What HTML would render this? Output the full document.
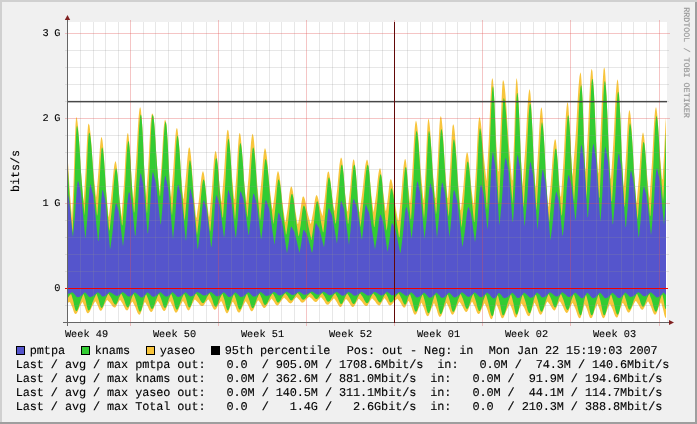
<!DOCTYPE html><html><head><meta charset="utf-8"><style>html,body{margin:0;padding:0;width:697px;height:424px;overflow:hidden;background:#f0f0f0}</style></head><body><svg width="697" height="424" viewBox="0 0 697 424" style="position:absolute;left:0;top:0;will-change:transform">
<rect x="0" y="0" width="697" height="424" fill="#f0f0f0"/>
<path d="M0,0 H697 V2 H2 V424 H0 Z" fill="#d0d0d0" shape-rendering="crispEdges"/>
<path d="M697,0 V424 H0 V422 H695 V2 H697 Z" fill="#9e9e9e" shape-rendering="crispEdges"/>
<rect x="67" y="22" width="600" height="300" fill="#ffffff" shape-rendering="crispEdges"/>
<path d="M67.5,288.0 L67.5,157.3 L68.0,162.7 L68.5,170.1 L69.0,178.8 L69.5,187.0 L70.0,194.2 L70.5,200.2 L71.0,206.2 L71.5,212.3 L72.0,218.3 L72.5,206.4 L73.0,194.6 L73.5,182.7 L74.0,168.7 L74.5,152.0 L75.0,136.4 L75.5,124.7 L76.0,118.2 L76.5,116.9 L77.0,118.5 L77.5,121.9 L78.0,126.6 L78.5,133.2 L79.0,139.5 L79.5,146.7 L80.0,154.7 L80.5,163.5 L81.0,171.4 L81.5,177.8 L82.0,183.7 L82.5,189.7 L83.0,195.6 L83.5,201.5 L84.0,196.3 L84.5,188.4 L85.0,180.4 L85.5,172.4 L86.0,162.6 L86.5,151.2 L87.0,140.6 L87.5,131.9 L88.0,125.8 L88.5,123.5 L89.0,124.2 L89.5,125.6 L90.0,129.4 L90.5,133.5 L91.0,139.7 L91.5,146.0 L92.0,153.1 L92.5,160.5 L93.0,166.7 L93.5,172.4 L94.0,177.4 L94.5,182.4 L95.0,187.4 L95.5,192.5 L96.0,197.5 L96.5,193.9 L97.0,188.2 L97.5,182.5 L98.0,176.8 L98.5,170.1 L99.0,162.5 L99.5,154.1 L100.0,147.1 L100.5,141.8 L101.0,138.3 L101.5,136.7 L102.0,138.3 L102.5,140.6 L103.0,145.1 L103.5,150.8 L104.0,157.8 L104.5,165.8 L105.0,173.7 L105.5,181.5 L106.0,188.4 L106.5,194.2 L107.0,199.9 L107.5,205.7 L108.0,211.4 L108.5,217.2 L109.0,215.0 L109.5,210.8 L110.0,206.7 L110.5,202.5 L111.0,198.4 L111.5,193.6 L112.0,188.5 L112.5,182.5 L113.0,176.5 L113.5,171.5 L114.0,167.2 L114.5,163.9 L115.0,162.2 L115.5,161.0 L116.0,162.3 L116.5,164.8 L117.0,168.5 L117.5,174.1 L118.0,179.5 L118.5,185.7 L119.0,193.0 L119.5,198.3 L120.0,202.9 L120.5,207.6 L121.0,212.2 L121.5,216.9 L122.0,210.2 L122.5,203.5 L123.0,196.8 L123.5,190.1 L124.0,182.9 L124.5,174.7 L125.0,165.3 L125.5,155.6 L126.0,147.4 L126.5,140.8 L127.0,135.5 L127.5,133.5 L128.0,133.1 L128.5,135.2 L129.0,140.4 L129.5,146.1 L130.0,152.1 L130.5,159.9 L131.0,169.3 L131.5,178.2 L132.0,186.1 L132.5,192.7 L133.0,199.2 L133.5,196.0 L134.0,189.3 L134.5,182.6 L135.0,175.9 L135.5,169.2 L136.0,161.9 L136.5,153.7 L137.0,144.3 L137.5,134.4 L138.0,126.1 L138.5,118.4 L139.0,113.1 L139.5,109.1 L140.0,107.2 L140.5,107.8 L141.0,110.6 L141.5,116.0 L142.0,122.1 L142.5,130.0 L143.0,140.2 L143.5,152.3 L144.0,164.0 L144.5,173.6 L145.0,181.4 L145.5,189.2 L146.0,197.0 L146.5,190.1 L147.0,183.1 L147.5,176.2 L148.0,169.2 L148.5,161.5 L149.0,152.9 L149.5,142.6 L150.0,133.3 L150.5,124.8 L151.0,119.3 L151.5,115.5 L152.0,113.6 L152.5,113.8 L153.0,114.6 L153.5,116.2 L154.0,120.8 L154.5,125.9 L155.0,133.0 L155.5,140.7 L156.0,149.4 L156.5,157.2 L157.0,164.4 L157.5,170.6 L158.0,176.4 L158.5,182.2 L159.0,188.1 L159.5,191.8 L160.0,185.2 L160.5,178.7 L161.0,172.1 L161.5,164.7 L162.0,156.7 L162.5,146.9 L163.0,138.0 L163.5,130.0 L164.0,124.8 L164.5,121.2 L165.0,119.4 L165.5,120.6 L166.0,121.9 L166.5,124.9 L167.0,131.0 L167.5,139.2 L168.0,148.6 L168.5,159.9 L169.0,170.3 L169.5,179.6 L170.0,187.4 L170.5,195.0 L171.0,197.4 L171.5,191.3 L172.0,185.3 L172.5,179.3 L173.0,173.2 L173.5,166.0 L174.0,158.0 L174.5,149.0 L175.0,141.5 L175.5,135.2 L176.0,130.4 L176.5,128.4 L177.0,128.0 L177.5,129.6 L178.0,133.5 L178.5,138.3 L179.0,144.0 L179.5,150.3 L180.0,157.7 L180.5,166.4 L181.0,175.1 L181.5,180.8 L182.0,186.4 L182.5,192.1 L183.0,197.8 L183.5,199.4 L184.0,194.8 L184.5,190.3 L185.0,185.8 L185.5,181.2 L186.0,175.8 L186.5,169.8 L187.0,163.1 L187.5,157.4 L188.0,152.7 L188.5,149.1 L189.0,147.6 L189.5,147.4 L190.0,148.8 L190.5,152.2 L191.0,156.4 L191.5,162.7 L192.0,169.4 L192.5,177.2 L193.0,184.4 L193.5,190.8 L194.0,196.4 L194.5,201.7 L195.0,206.9 L195.5,212.2 L196.0,217.5 L196.5,217.5 L197.0,213.9 L197.5,210.3 L198.0,206.8 L198.5,203.2 L199.0,199.2 L199.5,194.8 L200.0,189.8 L200.5,184.6 L201.0,180.2 L201.5,176.5 L202.0,173.6 L202.5,172.1 L203.0,171.1 L203.5,172.2 L204.0,174.2 L204.5,177.3 L205.0,181.9 L205.5,187.0 L206.0,192.8 L206.5,197.6 L207.0,202.0 L207.5,205.8 L208.0,209.7 L208.5,213.6 L209.0,217.4 L209.5,214.0 L210.0,208.8 L210.5,203.6 L211.0,198.4 L211.5,193.2 L212.0,186.9 L212.5,180.2 L213.0,172.5 L213.5,165.7 L214.0,159.5 L214.5,155.3 L215.0,152.3 L215.5,150.9 L216.0,151.6 L216.5,153.7 L217.0,157.3 L217.5,162.5 L218.0,166.9 L218.5,172.7 L219.0,179.3 L219.5,186.2 L220.0,190.7 L220.5,195.3 L221.0,199.8 L221.5,202.3 L222.0,196.5 L222.5,190.7 L223.0,184.9 L223.5,179.1 L224.0,172.8 L224.5,165.6 L225.0,157.3 L225.5,149.0 L226.0,141.9 L226.5,136.3 L227.0,131.7 L227.5,130.1 L228.0,129.7 L228.5,131.3 L229.0,135.1 L229.5,139.9 L230.0,146.7 L230.5,154.3 L231.0,162.7 L231.5,169.7 L232.0,176.2 L232.5,181.8 L233.0,187.4 L233.5,193.0 L234.0,198.6 L234.5,199.4 L235.0,193.0 L235.5,186.5 L236.0,180.1 L236.5,173.1 L237.0,165.2 L237.5,155.7 L238.0,147.2 L238.5,140.2 L239.0,135.1 L239.5,133.1 L240.0,133.3 L240.5,134.9 L241.0,139.3 L241.5,144.7 L242.0,151.3 L242.5,157.6 L243.0,164.2 L243.5,172.2 L244.0,179.8 L244.5,185.7 L245.0,191.3 L245.5,196.8 L246.0,202.4 L246.5,199.2 L247.0,193.8 L247.5,188.4 L248.0,183.0 L248.5,177.6 L249.0,171.1 L249.5,164.1 L250.0,156.1 L250.5,149.1 L251.0,142.6 L251.5,138.3 L252.0,135.2 L252.5,133.7 L253.0,134.6 L253.5,136.7 L254.0,141.1 L254.5,146.8 L255.0,153.5 L255.5,161.6 L256.0,169.2 L256.5,175.9 L257.0,181.6 L257.5,187.1 L258.0,192.6 L258.5,198.0 L259.0,203.5 L259.5,198.9 L260.0,194.2 L260.5,189.6 L261.0,185.0 L261.5,179.8 L262.0,174.2 L262.5,167.3 L263.0,161.1 L263.5,155.5 L264.0,151.8 L264.5,149.3 L265.0,148.0 L265.5,149.2 L266.0,150.7 L266.5,154.1 L267.0,157.9 L267.5,163.1 L268.0,168.8 L268.5,175.0 L269.0,180.6 L269.5,185.8 L270.0,190.3 L270.5,194.5 L271.0,198.8 L271.5,203.0 L272.0,207.2 L272.5,209.9 L273.0,206.4 L273.5,202.8 L274.0,199.3 L274.5,195.8 L275.0,191.5 L275.5,186.6 L276.0,181.6 L276.5,177.3 L277.0,174.2 L277.5,172.1 L278.0,171.1 L278.5,172.1 L279.0,173.4 L279.5,176.3 L280.0,179.6 L280.5,184.0 L281.0,188.8 L281.5,194.1 L282.0,198.8 L282.5,203.2 L283.0,206.8 L283.5,210.4 L284.0,214.0 L284.5,217.6 L285.0,221.2 L285.5,222.1 L286.0,219.0 L286.5,215.9 L287.0,212.8 L287.5,209.7 L288.0,206.0 L288.5,201.9 L289.0,197.3 L289.5,193.4 L290.0,190.2 L290.5,187.7 L291.0,186.7 L291.5,186.5 L292.0,187.4 L292.5,189.4 L293.0,192.0 L293.5,195.7 L294.0,199.8 L294.5,204.2 L295.0,208.0 L295.5,211.5 L296.0,214.5 L296.5,217.6 L297.0,220.6 L297.5,223.6 L298.0,224.3 L298.5,221.6 L299.0,218.9 L299.5,216.2 L300.0,213.3 L300.5,210.0 L301.0,206.0 L301.5,202.4 L302.0,199.5 L302.5,197.3 L303.0,196.5 L303.5,196.5 L304.0,197.0 L304.5,198.3 L305.0,199.8 L305.5,202.0 L306.0,204.3 L306.5,207.1 L307.0,209.9 L307.5,212.2 L308.0,214.4 L308.5,216.3 L309.0,218.2 L309.5,220.1 L310.0,222.0 L310.5,223.9 L311.0,223.2 L311.5,220.6 L312.0,218.1 L312.5,215.5 L313.0,212.8 L313.5,209.7 L314.0,206.0 L314.5,202.5 L315.0,199.4 L315.5,197.2 L316.0,195.8 L316.5,195.1 L317.0,195.6 L317.5,196.5 L318.0,197.9 L318.5,200.1 L319.0,202.4 L319.5,205.1 L320.0,207.2 L320.5,209.2 L321.0,210.9 L321.5,212.7 L322.0,214.4 L322.5,216.2 L323.0,212.3 L323.5,208.4 L324.0,204.5 L324.5,200.6 L325.0,196.1 L325.5,191.2 L326.0,185.4 L326.5,180.4 L327.0,176.1 L327.5,173.0 L328.0,171.7 L328.5,171.4 L329.0,172.3 L329.5,174.8 L330.0,177.9 L330.5,182.0 L331.0,186.2 L331.5,190.6 L332.0,195.7 L332.5,199.2 L333.0,202.6 L333.5,205.9 L334.0,209.3 L334.5,211.2 L335.0,207.2 L335.5,203.1 L336.0,199.1 L336.5,195.1 L337.0,190.9 L337.5,186.0 L338.0,180.6 L338.5,174.6 L339.0,169.4 L339.5,164.5 L340.0,161.3 L340.5,158.7 L341.0,157.6 L341.5,157.9 L342.0,159.3 L342.5,163.0 L343.0,167.8 L343.5,173.0 L344.0,178.9 L344.5,185.7 L345.0,192.2 L345.5,196.8 L346.0,201.4 L346.5,206.0 L347.0,210.6 L347.5,211.7 L348.0,207.4 L348.5,203.2 L349.0,198.9 L349.5,194.6 L350.0,189.8 L350.5,184.6 L351.0,178.2 L351.5,172.4 L352.0,167.2 L352.5,163.4 L353.0,160.5 L353.5,159.3 L354.0,159.7 L354.5,161.8 L355.0,165.3 L355.5,169.0 L356.0,173.7 L356.5,179.9 L357.0,187.1 L357.5,194.5 L358.0,200.7 L358.5,206.2 L359.0,211.4 L359.5,212.0 L360.0,208.6 L360.5,205.1 L361.0,201.6 L361.5,198.2 L362.0,194.7 L362.5,190.6 L363.0,186.4 L363.5,181.4 L364.0,176.3 L364.5,171.9 L365.0,167.7 L365.5,164.6 L366.0,161.9 L366.5,160.6 L367.0,159.6 L367.5,160.3 L368.0,161.9 L368.5,165.2 L369.0,169.5 L369.5,174.1 L370.0,180.1 L370.5,186.5 L371.0,191.6 L371.5,195.9 L372.0,200.1 L372.5,204.2 L373.0,208.3 L373.5,212.5 L374.0,209.1 L374.5,205.7 L375.0,202.2 L375.5,198.8 L376.0,195.3 L376.5,191.1 L377.0,186.4 L377.5,181.4 L378.0,177.1 L378.5,173.3 L379.0,170.6 L379.5,168.9 L380.0,168.0 L380.5,169.1 L381.0,171.2 L381.5,174.4 L382.0,179.1 L382.5,184.4 L383.0,189.9 L383.5,194.6 L384.0,198.7 L384.5,202.5 L385.0,206.4 L385.5,210.2 L386.0,211.1 L386.5,207.7 L387.0,204.2 L387.5,200.8 L388.0,196.8 L388.5,192.2 L389.0,187.3 L389.5,183.2 L390.0,180.4 L390.5,179.2 L391.0,179.3 L391.5,180.1 L392.0,181.9 L392.5,184.2 L393.0,187.5 L393.5,191.0 L394.0,195.2 L394.5,199.4 L395.0,202.9 L395.5,206.4 L396.0,209.3 L396.5,212.2 L397.0,215.0 L397.5,217.9 L398.0,220.8 L398.5,220.6 L399.0,216.0 L399.5,211.3 L400.0,206.7 L400.5,202.1 L401.0,197.2 L401.5,191.5 L402.0,185.2 L402.5,178.3 L403.0,172.4 L403.5,166.8 L404.0,163.1 L404.5,160.2 L405.0,158.9 L405.5,159.2 L406.0,161.4 L406.5,165.4 L407.0,171.0 L407.5,177.8 L408.0,183.9 L408.5,189.1 L409.0,193.8 L409.5,198.4 L410.0,203.1 L410.5,198.2 L411.0,191.0 L411.5,183.8 L412.0,176.6 L412.5,168.6 L413.0,159.8 L413.5,149.1 L414.0,139.4 L414.5,131.0 L415.0,125.2 L415.5,121.9 L416.0,120.6 L416.5,122.1 L417.0,124.2 L417.5,128.4 L418.0,133.3 L418.5,139.7 L419.0,146.6 L419.5,154.4 L420.0,161.7 L420.5,168.2 L421.0,174.1 L421.5,179.4 L422.0,184.7 L422.5,189.9 L423.0,195.2 L423.5,200.5 L424.0,197.2 L424.5,188.2 L425.0,179.3 L425.5,170.1 L426.0,159.1 L426.5,146.0 L427.0,134.4 L427.5,125.6 L428.0,120.2 L428.5,118.5 L429.0,120.2 L429.5,123.4 L430.0,128.2 L430.5,134.8 L431.0,142.2 L431.5,151.1 L432.0,159.6 L432.5,166.9 L433.0,173.5 L433.5,179.6 L434.0,185.6 L434.5,191.6 L435.0,197.6 L435.5,198.0 L436.0,190.1 L436.5,182.1 L437.0,174.2 L437.5,165.6 L438.0,155.9 L438.5,144.1 L439.0,133.7 L439.5,125.0 L440.0,118.7 L440.5,116.3 L441.0,116.4 L441.5,118.1 L442.0,122.3 L442.5,127.3 L443.0,134.6 L443.5,142.4 L444.0,151.3 L444.5,159.5 L445.0,166.9 L445.5,173.3 L446.0,179.4 L446.5,185.4 L447.0,191.4 L447.5,197.5 L448.0,198.2 L448.5,191.1 L449.0,183.9 L449.5,176.7 L450.0,169.0 L450.5,160.2 L451.0,149.5 L451.5,140.1 L452.0,132.3 L452.5,126.6 L453.0,124.4 L453.5,124.6 L454.0,126.2 L454.5,130.1 L455.0,134.8 L455.5,141.7 L456.0,148.9 L456.5,157.6 L457.0,166.3 L457.5,173.5 L458.0,180.5 L458.5,186.4 L459.0,192.3 L459.5,198.3 L460.0,204.2 L460.5,210.1 L461.0,209.7 L461.5,204.9 L462.0,200.2 L462.5,195.5 L463.0,190.7 L463.5,185.1 L464.0,179.1 L464.5,172.1 L465.0,165.8 L465.5,160.0 L466.0,156.3 L466.5,153.5 L467.0,152.2 L467.5,152.8 L468.0,154.4 L468.5,157.8 L469.0,162.1 L469.5,167.2 L470.0,173.4 L470.5,179.3 L471.0,184.5 L471.5,189.1 L472.0,193.3 L472.5,197.5 L473.0,201.7 L473.5,206.0 L474.0,200.6 L474.5,192.8 L475.0,185.1 L475.5,177.3 L476.0,168.7 L476.5,159.2 L477.0,147.7 L477.5,137.3 L478.0,128.2 L478.5,122.0 L479.0,118.4 L479.5,117.0 L480.0,118.2 L480.5,120.5 L481.0,124.1 L481.5,129.0 L482.0,134.5 L482.5,141.1 L483.0,147.7 L483.5,153.3 L484.0,158.6 L484.5,163.1 L485.0,167.7 L485.5,172.2 L486.0,176.8 L486.5,181.3 L487.0,172.3 L487.5,163.4 L488.0,154.4 L488.5,145.4 L489.0,135.2 L489.5,123.7 L490.0,110.4 L490.5,98.9 L491.0,89.1 L491.5,82.0 L492.0,78.8 L492.5,78.2 L493.0,80.5 L493.5,86.6 L494.0,94.5 L494.5,103.8 L495.0,116.3 L495.5,127.7 L496.0,137.8 L496.5,146.2 L497.0,154.4 L497.5,162.6 L498.0,170.8 L498.5,171.7 L499.0,161.7 L499.5,151.6 L500.0,141.6 L500.5,129.8 L501.0,115.9 L501.5,102.1 L502.0,90.7 L502.5,82.7 L503.0,80.0 L503.5,80.7 L504.0,82.2 L504.5,85.3 L505.0,89.8 L505.5,94.9 L506.0,101.8 L506.5,108.7 L507.0,117.0 L507.5,125.5 L508.0,133.0 L508.5,140.0 L509.0,146.6 L509.5,152.3 L510.0,158.0 L510.5,163.7 L511.0,169.4 L511.5,175.1 L512.0,180.8 L512.5,179.2 L513.0,166.8 L513.5,154.4 L514.0,141.4 L514.5,125.9 L515.0,107.5 L515.5,92.4 L516.0,82.2 L516.5,78.0 L517.0,79.4 L517.5,83.5 L518.0,90.9 L518.5,101.6 L519.0,111.5 L519.5,122.7 L520.0,136.0 L520.5,149.1 L521.0,159.0 L521.5,168.3 L522.0,177.6 L522.5,186.9 L523.0,180.0 L523.5,173.1 L524.0,166.2 L524.5,159.2 L525.0,152.3 L525.5,144.3 L526.0,135.9 L526.5,125.8 L527.0,115.8 L527.5,107.4 L528.0,100.0 L528.5,94.5 L529.0,91.0 L529.5,89.1 L530.0,90.6 L530.5,94.6 L531.0,101.6 L531.5,111.8 L532.0,121.4 L532.5,132.0 L533.0,144.7 L533.5,156.6 L534.0,165.3 L534.5,174.0 L535.0,182.7 L535.5,188.3 L536.0,181.4 L536.5,174.5 L537.0,167.6 L537.5,160.7 L538.0,152.7 L538.5,143.9 L539.0,133.6 L539.5,124.7 L540.0,116.8 L540.5,111.3 L541.0,108.3 L541.5,107.3 L542.0,109.5 L542.5,114.4 L543.0,121.0 L543.5,131.0 L544.0,138.7 L544.5,147.4 L545.0,157.5 L545.5,168.1 L546.0,177.1 L546.5,185.7 L547.0,192.9 L547.5,200.0 L548.0,207.2 L548.5,205.4 L549.0,200.4 L549.5,195.4 L550.0,190.5 L550.5,185.5 L551.0,179.5 L551.5,173.4 L552.0,166.0 L552.5,158.8 L553.0,152.8 L553.5,147.3 L554.0,143.3 L554.5,140.5 L555.0,139.2 L555.5,139.5 L556.0,141.6 L556.5,145.9 L557.0,152.1 L557.5,159.3 L558.0,166.8 L558.5,174.1 L559.0,180.0 L559.5,185.4 L560.0,190.9 L560.5,196.3 L561.0,196.7 L561.5,189.5 L562.0,182.3 L562.5,175.1 L563.0,167.9 L563.5,160.2 L564.0,151.4 L564.5,141.4 L565.0,130.7 L565.5,121.8 L566.0,113.6 L566.5,107.9 L567.0,104.0 L567.5,102.0 L568.0,103.4 L568.5,108.1 L569.0,115.8 L569.5,123.6 L570.0,131.9 L570.5,141.7 L571.0,152.9 L571.5,162.7 L572.0,171.4 L572.5,177.1 L573.0,170.6 L573.5,164.1 L574.0,157.6 L574.5,151.1 L575.0,144.6 L575.5,138.1 L576.0,130.1 L576.5,122.1 L577.0,112.5 L577.5,102.9 L578.0,94.9 L578.5,87.0 L579.0,81.5 L579.5,76.4 L580.0,74.1 L580.5,72.3 L581.0,74.3 L581.5,81.0 L582.0,89.8 L582.5,98.4 L583.0,111.4 L583.5,126.4 L584.0,141.7 L584.5,155.0 L585.0,165.9 L585.5,172.2 L586.0,163.8 L586.5,155.4 L587.0,147.0 L587.5,138.6 L588.0,129.1 L588.5,118.8 L589.0,106.3 L589.5,94.7 L590.0,84.5 L590.5,77.1 L591.0,71.3 L591.5,68.9 L592.0,69.4 L592.5,71.7 L593.0,78.3 L593.5,86.0 L594.0,93.0 L594.5,103.5 L595.0,114.7 L595.5,127.9 L596.0,140.1 L596.5,148.5 L597.0,156.9 L597.5,165.3 L598.0,173.7 L598.5,171.5 L599.0,162.3 L599.5,153.1 L600.0,143.8 L600.5,134.4 L601.0,123.1 L601.5,110.4 L602.0,97.0 L602.5,85.8 L603.0,76.9 L603.5,70.1 L604.0,67.5 L604.5,68.0 L605.0,70.5 L605.5,77.5 L606.0,85.9 L606.5,95.5 L607.0,106.2 L607.5,117.7 L608.0,131.1 L608.5,143.3 L609.0,152.2 L609.5,161.2 L610.0,170.1 L610.5,179.0 L611.0,178.1 L611.5,170.6 L612.0,163.0 L612.5,155.5 L613.0,148.0 L613.5,139.8 L614.0,130.5 L614.5,120.0 L615.0,108.8 L615.5,99.6 L616.0,91.2 L616.5,85.2 L617.0,81.3 L617.5,79.2 L618.0,80.8 L618.5,84.9 L619.0,92.2 L619.5,101.3 L620.0,110.2 L620.5,121.5 L621.0,134.6 L621.5,148.0 L622.0,159.4 L622.5,169.4 L623.0,178.6 L623.5,187.8 L624.0,184.2 L624.5,177.3 L625.0,170.4 L625.5,163.5 L626.0,155.8 L626.5,147.4 L627.0,137.2 L627.5,127.9 L628.0,119.8 L628.5,114.3 L629.0,111.1 L629.5,110.0 L630.0,111.8 L630.5,115.1 L631.0,120.4 L631.5,127.5 L632.0,135.6 L632.5,144.8 L633.0,153.1 L633.5,162.7 L634.0,170.7 L634.5,177.3 L635.0,184.0 L635.5,190.6 L636.0,197.3 L636.5,203.9 L637.0,198.4 L637.5,192.9 L638.0,187.3 L638.5,181.8 L639.0,176.2 L639.5,169.4 L640.0,161.9 L640.5,153.8 L641.0,146.9 L641.5,140.7 L642.0,136.3 L642.5,133.7 L643.0,132.2 L643.5,133.7 L644.0,136.2 L644.5,140.4 L645.0,146.4 L645.5,153.1 L646.0,160.9 L646.5,167.9 L647.0,174.3 L647.5,179.6 L648.0,184.9 L648.5,190.1 L649.0,195.4 L649.5,198.2 L650.0,191.0 L650.5,183.9 L651.0,176.8 L651.5,169.6 L652.0,162.0 L652.5,153.2 L653.0,143.2 L653.5,132.7 L654.0,124.0 L654.5,116.7 L655.0,111.0 L655.5,108.4 L656.0,107.1 L656.5,108.8 L657.0,112.3 L657.5,117.0 L658.0,124.2 L658.5,131.9 L659.0,139.9 L659.5,148.4 L660.0,155.4 L660.5,161.3 L661.0,167.2 L661.5,173.1 L662.0,179.1 L662.5,179.4 L663.0,171.4 L663.5,163.5 L664.0,155.2 L664.5,145.2 L665.0,133.4 L665.5,123.7 L666.0,117.2 L666.0,288.0 Z" fill="#f8c53c"/>
<path d="M67.5,288.0 L67.5,165.2 L68.0,170.3 L68.5,178.0 L69.0,186.6 L69.5,195.9 L70.0,203.7 L70.5,210.6 L71.0,216.9 L71.5,222.8 L72.0,227.9 L72.5,232.9 L73.0,221.7 L73.5,209.3 L74.0,197.0 L74.5,182.5 L75.0,165.3 L75.5,148.7 L76.0,135.9 L76.5,128.0 L77.0,125.6 L77.5,127.3 L78.0,129.8 L78.5,134.6 L79.0,140.3 L79.5,147.5 L80.0,155.5 L80.5,164.3 L81.0,172.2 L81.5,179.5 L82.0,185.8 L82.5,191.8 L83.0,197.7 L83.5,203.6 L84.0,209.6 L84.5,215.5 L85.0,206.6 L85.5,197.7 L86.0,188.8 L86.5,178.9 L87.0,167.3 L87.5,154.4 L88.0,143.6 L88.5,136.3 L89.0,132.8 L89.5,132.7 L90.0,134.2 L90.5,137.4 L91.0,141.7 L91.5,147.4 L92.0,153.9 L92.5,161.4 L93.0,169.4 L93.5,176.6 L94.0,183.2 L94.5,189.1 L95.0,194.5 L95.5,199.9 L96.0,205.3 L96.5,210.7 L97.0,216.1 L97.5,213.9 L98.0,206.6 L98.5,199.3 L99.0,192.0 L99.5,183.2 L100.0,173.0 L100.5,163.1 L101.0,154.9 L101.5,149.2 L102.0,147.2 L102.5,148.1 L103.0,149.8 L103.5,154.4 L104.0,159.6 L104.5,166.8 L105.0,174.5 L105.5,183.3 L106.0,191.2 L106.5,198.5 L107.0,204.7 L107.5,210.6 L108.0,216.5 L108.5,222.4 L109.0,228.4 L109.5,231.1 L110.0,226.3 L110.5,221.5 L111.0,216.7 L111.5,211.9 L112.0,206.9 L112.5,201.0 L113.0,194.5 L113.5,187.4 L114.0,181.4 L114.5,175.9 L115.0,172.1 L115.5,169.5 L116.0,168.2 L116.5,169.0 L117.0,171.0 L117.5,174.9 L118.0,180.3 L118.5,186.5 L119.0,193.8 L119.5,200.2 L120.0,206.1 L120.5,211.0 L121.0,215.9 L121.5,220.8 L122.0,225.8 L122.5,224.6 L123.0,217.5 L123.5,210.3 L124.0,203.2 L124.5,196.1 L125.0,187.5 L125.5,178.1 L126.0,167.5 L126.5,158.5 L127.0,150.6 L127.5,144.9 L128.0,142.0 L128.5,140.8 L129.0,142.6 L129.5,146.9 L130.0,152.8 L130.5,160.7 L131.0,170.1 L131.5,179.0 L132.0,186.9 L132.5,193.5 L133.0,200.0 L133.5,206.4 L134.0,212.9 L134.5,210.9 L135.0,203.1 L135.5,195.4 L136.0,187.7 L136.5,179.9 L137.0,171.1 L137.5,161.6 L138.0,150.2 L138.5,139.4 L139.0,130.0 L139.5,122.9 L140.0,116.9 L140.5,114.8 L141.0,114.4 L141.5,116.8 L142.0,122.9 L142.5,130.8 L143.0,141.0 L143.5,153.1 L144.0,164.8 L144.5,175.1 L145.0,183.9 L145.5,192.3 L146.0,200.7 L146.5,209.1 L147.0,214.0 L147.5,205.1 L148.0,196.2 L148.5,187.2 L149.0,178.3 L149.5,167.5 L150.0,155.5 L150.5,142.4 L151.0,131.6 L151.5,123.1 L152.0,117.1 L152.5,114.6 L153.0,115.4 L153.5,117.0 L154.0,121.6 L154.5,126.7 L155.0,133.8 L155.5,141.5 L156.0,150.2 L156.5,158.0 L157.0,165.2 L157.5,171.3 L158.0,177.2 L158.5,183.0 L159.0,188.9 L159.5,194.7 L160.0,196.8 L160.5,190.0 L161.0,183.2 L161.5,176.5 L162.0,169.7 L162.5,161.4 L163.0,152.2 L163.5,142.4 L164.0,134.1 L164.5,127.8 L165.0,123.2 L165.5,121.4 L166.0,122.7 L166.5,125.7 L167.0,131.8 L167.5,140.0 L168.0,149.4 L168.5,160.7 L169.0,171.1 L169.5,180.4 L170.0,188.2 L170.5,195.8 L171.0,203.5 L171.5,211.1 L172.0,215.7 L172.5,208.2 L173.0,200.8 L173.5,193.3 L174.0,185.7 L174.5,176.5 L175.0,166.0 L175.5,155.6 L176.0,146.5 L176.5,140.4 L177.0,136.7 L177.5,135.3 L178.0,137.0 L178.5,140.0 L179.0,144.8 L179.5,151.1 L180.0,158.5 L180.5,167.2 L181.0,176.1 L181.5,183.6 L182.0,190.7 L182.5,196.8 L183.0,202.8 L183.5,208.9 L184.0,214.9 L184.5,221.0 L185.0,217.5 L185.5,211.6 L186.0,205.7 L186.5,199.8 L187.0,192.8 L187.5,184.9 L188.0,176.4 L188.5,169.3 L189.0,164.2 L189.5,161.1 L190.0,160.1 L190.5,161.6 L191.0,164.3 L191.5,168.6 L192.0,174.4 L192.5,181.0 L193.0,188.8 L193.5,196.6 L194.0,203.2 L194.5,209.3 L195.0,214.7 L195.5,220.1 L196.0,225.5 L196.5,230.9 L197.0,235.3 L197.5,231.0 L198.0,226.8 L198.5,222.5 L199.0,218.2 L199.5,213.9 L200.0,208.7 L200.5,203.0 L201.0,196.7 L201.5,191.2 L202.0,186.3 L202.5,182.9 L203.0,180.5 L203.5,179.3 L204.0,180.0 L204.5,181.5 L205.0,184.8 L205.5,188.9 L206.0,193.9 L206.5,199.9 L207.0,205.8 L207.5,210.8 L208.0,215.4 L208.5,219.5 L209.0,223.6 L209.5,227.7 L210.0,231.8 L210.5,229.7 L211.0,223.4 L211.5,217.0 L212.0,210.7 L212.5,204.2 L213.0,196.5 L213.5,187.7 L214.0,178.5 L214.5,170.8 L215.0,164.7 L215.5,160.0 L216.0,158.2 L216.5,158.3 L217.0,159.6 L217.5,163.3 L218.0,167.7 L218.5,173.5 L219.0,180.1 L219.5,187.2 L220.0,193.1 L220.5,198.6 L221.0,203.3 L221.5,208.1 L222.0,212.9 L222.5,217.6 L223.0,217.6 L223.5,210.2 L224.0,202.9 L224.5,195.5 L225.0,187.8 L225.5,178.8 L226.0,168.3 L226.5,158.2 L227.0,149.3 L227.5,143.4 L228.0,139.8 L228.5,138.6 L229.0,140.3 L229.5,143.8 L230.0,148.7 L230.5,156.0 L231.0,163.9 L231.5,173.2 L232.0,181.6 L232.5,189.2 L233.0,195.6 L233.5,201.8 L234.0,208.1 L234.5,214.3 L235.0,220.6 L235.5,214.4 L236.0,207.0 L236.5,199.5 L237.0,192.0 L237.5,182.8 L238.0,172.4 L238.5,162.0 L239.0,152.9 L239.5,146.9 L240.0,143.8 L240.5,143.1 L241.0,144.6 L241.5,147.8 L242.0,152.1 L242.5,158.3 L243.0,165.0 L243.5,173.0 L244.0,180.6 L244.5,187.2 L245.0,193.1 L245.5,198.5 L246.0,203.9 L246.5,209.3 L247.0,214.7 L247.5,217.8 L248.0,211.5 L248.5,205.3 L249.0,199.1 L249.5,192.9 L250.0,185.4 L250.5,177.2 L251.0,167.9 L251.5,160.3 L252.0,154.0 L252.5,149.2 L253.0,147.5 L253.5,147.7 L254.0,149.2 L254.5,153.2 L255.0,157.9 L255.5,164.5 L256.0,171.7 L256.5,179.8 L257.0,186.9 L257.5,193.6 L258.0,199.0 L258.5,204.5 L259.0,209.9 L259.5,215.4 L260.0,220.8 L260.5,217.3 L261.0,211.6 L261.5,205.8 L262.0,200.1 L262.5,193.4 L263.0,186.0 L263.5,177.4 L264.0,170.3 L264.5,164.7 L265.0,160.6 L265.5,159.0 L266.0,159.6 L266.5,160.8 L267.0,163.8 L267.5,167.2 L268.0,172.0 L268.5,177.2 L269.0,183.3 L269.5,189.5 L270.0,194.7 L270.5,199.9 L271.0,204.1 L271.5,208.3 L272.0,212.5 L272.5,216.7 L273.0,220.9 L273.5,224.3 L274.0,219.8 L274.5,215.4 L275.0,211.0 L275.5,206.3 L276.0,200.9 L276.5,194.4 L277.0,188.6 L277.5,183.9 L278.0,180.6 L278.5,179.3 L279.0,179.9 L279.5,181.0 L280.0,183.8 L280.5,186.9 L281.0,191.4 L281.5,196.2 L282.0,201.8 L282.5,207.1 L283.0,211.7 L283.5,216.0 L284.0,219.8 L284.5,223.6 L285.0,227.3 L285.5,231.1 L286.0,234.9 L286.5,233.4 L287.0,229.7 L287.5,226.0 L288.0,222.3 L288.5,218.3 L289.0,213.8 L289.5,208.3 L290.0,203.4 L290.5,199.0 L291.0,196.0 L291.5,194.3 L292.0,193.7 L292.5,194.6 L293.0,196.4 L293.5,199.0 L294.0,202.7 L294.5,206.8 L295.0,211.6 L295.5,216.1 L296.0,220.1 L296.5,223.5 L297.0,226.7 L297.5,230.0 L298.0,233.3 L298.5,236.5 L299.0,235.3 L299.5,232.2 L300.0,229.1 L300.5,225.9 L301.0,222.2 L301.5,217.9 L302.0,213.5 L302.5,209.7 L303.0,207.2 L303.5,205.8 L304.0,205.6 L304.5,206.2 L305.0,207.4 L305.5,209.2 L306.0,211.6 L306.5,214.4 L307.0,217.6 L307.5,221.0 L308.0,223.9 L308.5,226.7 L309.0,229.1 L309.5,231.4 L310.0,233.7 L310.5,235.9 L311.0,238.2 L311.5,239.9 L312.0,236.5 L312.5,233.0 L313.0,229.5 L313.5,226.0 L314.0,221.9 L314.5,217.2 L315.0,212.1 L315.5,207.9 L316.0,204.6 L316.5,202.2 L317.0,201.2 L317.5,201.6 L318.0,202.7 L318.5,204.8 L319.0,207.8 L319.5,211.2 L320.0,215.1 L320.5,218.7 L321.0,221.9 L321.5,224.5 L322.0,227.2 L322.5,229.9 L323.0,232.6 L323.5,231.4 L324.0,226.3 L324.5,221.3 L325.0,216.3 L325.5,210.9 L326.0,204.8 L326.5,197.5 L327.0,190.6 L327.5,184.5 L328.0,180.5 L328.5,178.1 L329.0,177.2 L329.5,178.2 L330.0,180.1 L330.5,182.9 L331.0,187.0 L331.5,191.4 L332.0,196.7 L332.5,201.6 L333.0,205.9 L333.5,209.7 L334.0,213.3 L334.5,216.9 L335.0,220.4 L335.5,224.0 L336.0,222.4 L336.5,217.4 L337.0,212.3 L337.5,207.3 L338.0,202.3 L338.5,196.1 L339.0,189.3 L339.5,181.8 L340.0,175.7 L340.5,170.5 L341.0,166.5 L341.5,164.9 L342.0,164.6 L342.5,166.0 L343.0,169.4 L343.5,173.8 L344.0,179.7 L344.5,186.5 L345.0,193.7 L345.5,199.6 L346.0,205.1 L346.5,210.0 L347.0,214.9 L347.5,219.8 L348.0,224.6 L348.5,222.6 L349.0,217.5 L349.5,212.5 L350.0,207.4 L350.5,202.3 L351.0,196.1 L351.5,189.2 L352.0,181.8 L352.5,175.7 L353.0,170.5 L353.5,166.5 L354.0,164.9 L354.5,164.7 L355.0,166.1 L355.5,169.8 L356.0,174.5 L356.5,180.7 L357.0,187.9 L357.5,195.3 L358.0,201.5 L358.5,207.1 L359.0,212.2 L359.5,217.3 L360.0,222.4 L360.5,227.5 L361.0,223.1 L361.5,218.7 L362.0,214.3 L362.5,209.9 L363.0,205.5 L363.5,200.5 L364.0,195.1 L364.5,188.8 L365.0,182.3 L365.5,177.0 L366.0,172.0 L366.5,168.5 L367.0,165.9 L367.5,164.7 L368.0,165.0 L368.5,166.4 L369.0,170.3 L369.5,174.9 L370.0,180.9 L370.5,187.9 L371.0,195.2 L371.5,201.2 L372.0,206.9 L372.5,211.8 L373.0,216.8 L373.5,221.8 L374.0,226.7 L374.5,227.0 L375.0,222.7 L375.5,218.3 L376.0,214.0 L376.5,209.6 L377.0,204.5 L377.5,199.0 L378.0,192.6 L378.5,186.8 L379.0,181.5 L379.5,177.9 L380.0,175.3 L380.5,174.1 L381.0,175.0 L381.5,177.0 L382.0,180.9 L382.5,186.2 L383.0,192.4 L383.5,199.6 L384.0,205.8 L384.5,211.4 L385.0,216.2 L385.5,221.0 L386.0,225.8 L386.5,230.7 L387.0,228.8 L387.5,224.0 L388.0,219.3 L388.5,214.3 L389.0,208.4 L389.5,201.3 L390.0,195.4 L390.5,191.1 L391.0,188.7 L391.5,188.2 L392.0,189.1 L392.5,190.7 L393.0,193.2 L393.5,196.2 L394.0,200.1 L394.5,204.3 L395.0,209.0 L395.5,213.4 L396.0,217.3 L396.5,221.0 L397.0,224.2 L397.5,227.3 L398.0,230.5 L398.5,233.7 L399.0,236.9 L399.5,237.4 L400.0,231.8 L400.5,226.1 L401.0,220.5 L401.5,214.9 L402.0,208.6 L402.5,201.7 L403.0,193.6 L403.5,185.6 L404.0,178.7 L404.5,173.4 L405.0,168.9 L405.5,167.3 L406.0,167.0 L406.5,168.9 L407.0,173.3 L407.5,179.8 L408.0,187.4 L408.5,195.1 L409.0,201.8 L409.5,207.3 L410.0,212.8 L410.5,218.3 L411.0,219.8 L411.5,211.7 L412.0,203.5 L412.5,195.4 L413.0,187.2 L413.5,177.2 L414.0,165.9 L414.5,154.4 L415.0,144.6 L415.5,137.5 L416.0,132.8 L416.5,130.5 L417.0,132.1 L417.5,134.1 L418.0,138.8 L418.5,144.0 L419.0,151.1 L419.5,158.8 L420.0,167.5 L420.5,175.7 L421.0,182.9 L421.5,189.4 L422.0,195.3 L422.5,201.2 L423.0,207.1 L423.5,213.0 L424.0,218.9 L424.5,212.8 L425.0,203.6 L425.5,194.5 L426.0,185.1 L426.5,173.9 L427.0,160.6 L427.5,148.7 L428.0,139.3 L428.5,133.0 L429.0,130.5 L429.5,132.2 L430.0,134.5 L430.5,139.3 L431.0,145.2 L431.5,152.5 L432.0,160.8 L432.5,169.7 L433.0,177.3 L433.5,184.6 L434.0,190.6 L434.5,196.7 L435.0,202.7 L435.5,208.7 L436.0,214.7 L436.5,210.5 L437.0,202.0 L437.5,193.4 L438.0,184.8 L438.5,174.7 L439.0,163.0 L439.5,150.9 L440.0,140.5 L440.5,133.6 L441.0,129.8 L441.5,129.1 L442.0,130.8 L442.5,134.3 L443.0,139.2 L443.5,145.9 L444.0,153.4 L444.5,162.3 L445.0,171.3 L445.5,178.8 L446.0,186.1 L446.5,192.2 L447.0,198.3 L447.5,204.5 L448.0,210.6 L448.5,216.8 L449.0,213.2 L449.5,205.4 L450.0,197.7 L450.5,189.9 L451.0,180.7 L451.5,170.1 L452.0,159.1 L452.5,149.7 L453.0,143.4 L453.5,140.0 L454.0,139.3 L454.5,140.9 L455.0,143.9 L455.5,148.6 L456.0,154.4 L456.5,161.5 L457.0,169.4 L457.5,178.0 L458.0,185.6 L458.5,192.7 L459.0,198.9 L459.5,204.7 L460.0,210.5 L460.5,216.2 L461.0,222.0 L461.5,227.8 L462.0,223.5 L462.5,218.0 L463.0,212.5 L463.5,207.0 L464.0,201.2 L464.5,194.5 L465.0,186.7 L465.5,178.9 L466.0,172.2 L466.5,167.1 L467.0,163.1 L467.5,161.6 L468.0,161.8 L468.5,163.1 L469.0,166.8 L469.5,171.2 L470.0,177.0 L470.5,183.7 L471.0,190.8 L471.5,196.7 L472.0,202.3 L472.5,207.1 L473.0,211.9 L473.5,216.7 L474.0,221.5 L474.5,222.3 L475.0,213.7 L475.5,205.2 L476.0,196.6 L476.5,187.9 L477.0,177.3 L477.5,165.4 L478.0,153.2 L478.5,142.8 L479.0,135.3 L479.5,130.3 L480.0,127.9 L480.5,129.5 L481.0,131.9 L481.5,136.6 L482.0,142.4 L482.5,149.6 L483.0,157.8 L483.5,166.6 L484.0,173.8 L484.5,180.8 L485.0,186.7 L485.5,192.6 L486.0,198.4 L486.5,204.3 L487.0,210.2 L487.5,201.2 L488.0,190.4 L488.5,179.7 L489.0,169.0 L489.5,157.0 L490.0,143.7 L490.5,127.8 L491.0,113.6 L491.5,101.1 L492.0,92.5 L492.5,87.7 L493.0,85.9 L493.5,88.7 L494.0,95.4 L494.5,104.6 L495.0,117.1 L495.5,131.7 L496.0,146.3 L496.5,158.9 L497.0,169.8 L497.5,180.1 L498.0,190.4 L498.5,200.7 L499.0,204.5 L499.5,193.1 L500.0,181.7 L500.5,170.2 L501.0,157.1 L501.5,141.8 L502.0,125.6 L502.5,111.8 L503.0,102.7 L503.5,98.5 L504.0,98.2 L504.5,99.9 L505.0,102.8 L505.5,107.6 L506.0,112.9 L506.5,120.2 L507.0,127.6 L507.5,136.5 L508.0,145.5 L508.5,153.3 L509.0,160.7 L509.5,167.4 L510.0,173.4 L510.5,179.5 L511.0,185.5 L511.5,191.6 L512.0,197.6 L512.5,203.7 L513.0,193.4 L513.5,181.3 L514.0,169.2 L514.5,156.0 L515.0,140.4 L515.5,122.7 L516.0,108.0 L516.5,98.0 L517.0,93.1 L517.5,93.3 L518.0,96.0 L518.5,103.3 L519.0,112.3 L519.5,123.5 L520.0,136.8 L520.5,149.9 L521.0,161.2 L521.5,171.1 L522.0,180.3 L522.5,189.5 L523.0,198.8 L523.5,208.0 L524.0,201.7 L524.5,193.7 L525.0,185.7 L525.5,177.7 L526.0,169.7 L526.5,160.1 L527.0,149.7 L527.5,137.9 L528.0,127.3 L528.5,117.5 L529.0,110.9 L529.5,105.6 L530.0,103.4 L530.5,104.0 L531.0,106.5 L531.5,113.5 L532.0,122.2 L532.5,132.8 L533.0,145.5 L533.5,157.6 L534.0,168.3 L534.5,177.4 L535.0,186.1 L535.5,194.8 L536.0,203.6 L536.5,210.6 L537.0,202.5 L537.5,194.5 L538.0,186.4 L538.5,178.3 L539.0,168.6 L539.5,157.6 L540.0,145.9 L540.5,136.1 L541.0,128.9 L541.5,124.1 L542.0,121.9 L542.5,123.9 L543.0,126.7 L543.5,132.4 L544.0,139.5 L544.5,148.2 L545.0,158.3 L545.5,168.9 L546.0,177.9 L546.5,186.5 L547.0,193.7 L547.5,200.8 L548.0,208.0 L548.5,215.2 L549.0,222.4 L549.5,219.3 L550.0,213.6 L550.5,207.9 L551.0,202.2 L551.5,196.5 L552.0,189.9 L552.5,182.8 L553.0,174.3 L553.5,166.6 L554.0,159.7 L554.5,154.5 L555.0,150.2 L555.5,148.7 L556.0,148.4 L556.5,150.0 L557.0,154.5 L557.5,160.3 L558.0,167.6 L558.5,176.4 L559.0,184.5 L559.5,191.9 L560.0,197.9 L560.5,203.9 L561.0,209.8 L561.5,215.8 L562.0,214.8 L562.5,206.7 L563.0,198.6 L563.5,190.5 L564.0,182.4 L564.5,173.1 L565.0,163.1 L565.5,151.1 L566.0,140.0 L566.5,130.2 L567.0,123.1 L567.5,117.5 L568.0,115.3 L568.5,115.7 L569.0,118.4 L569.5,124.4 L570.0,132.7 L570.5,142.5 L571.0,153.8 L571.5,163.5 L572.0,172.2 L572.5,179.8 L573.0,187.4 L573.5,195.0 L574.0,202.6 L574.5,194.4 L575.0,186.2 L575.5,177.9 L576.0,169.7 L576.5,161.5 L577.0,152.2 L577.5,142.1 L578.0,130.3 L578.5,118.1 L579.0,108.1 L579.5,98.8 L580.0,92.2 L580.5,87.4 L581.0,85.1 L581.5,86.0 L582.0,90.6 L582.5,99.2 L583.0,112.2 L583.5,127.2 L584.0,142.5 L584.5,155.8 L585.0,166.7 L585.5,177.6 L586.0,188.4 L586.5,199.3 L587.0,188.8 L587.5,178.3 L588.0,167.9 L588.5,157.4 L589.0,145.4 L589.5,132.0 L590.0,116.5 L590.5,103.0 L591.0,91.6 L591.5,83.3 L592.0,79.5 L592.5,78.8 L593.0,81.3 L593.5,86.8 L594.0,93.8 L594.5,104.3 L595.0,115.5 L595.5,128.7 L596.0,141.0 L596.5,152.0 L597.0,161.6 L597.5,170.5 L598.0,179.4 L598.5,188.3 L599.0,197.2 L599.5,198.1 L600.0,187.0 L600.5,175.8 L601.0,164.7 L601.5,152.8 L602.0,139.2 L602.5,122.9 L603.0,107.9 L603.5,95.0 L604.0,86.2 L604.5,81.8 L605.0,80.9 L605.5,83.4 L606.0,89.0 L606.5,96.3 L607.0,107.0 L607.5,118.5 L608.0,131.9 L608.5,144.3 L609.0,155.4 L609.5,165.0 L610.0,174.1 L610.5,183.2 L611.0,192.2 L611.5,201.3 L612.0,201.3 L612.5,192.4 L613.0,183.5 L613.5,174.6 L614.0,165.7 L614.5,155.4 L615.0,144.3 L615.5,131.1 L616.0,118.9 L616.5,108.1 L617.0,100.3 L617.5,94.2 L618.0,91.7 L618.5,92.2 L619.0,94.8 L619.5,102.2 L620.0,111.0 L620.5,122.3 L621.0,135.4 L621.5,148.8 L622.0,160.2 L622.5,170.4 L623.0,179.7 L623.5,189.0 L624.0,198.2 L624.5,207.5 L625.0,204.6 L625.5,196.4 L626.0,188.3 L626.5,180.1 L627.0,170.7 L627.5,159.9 L628.0,147.9 L628.5,137.9 L629.0,130.3 L629.5,125.3 L630.0,123.0 L630.5,124.8 L631.0,126.9 L631.5,132.0 L632.0,137.7 L632.5,145.6 L633.0,153.9 L633.5,163.4 L634.0,172.3 L634.5,180.2 L635.0,187.4 L635.5,193.8 L636.0,200.3 L636.5,206.7 L637.0,213.2 L637.5,219.6 L638.0,215.6 L638.5,209.0 L639.0,202.3 L639.5,195.7 L640.0,188.6 L640.5,180.5 L641.0,171.0 L641.5,161.7 L642.0,153.6 L642.5,147.8 L643.0,143.5 L643.5,141.7 L644.0,142.6 L644.5,144.7 L645.0,149.3 L645.5,155.2 L646.0,162.4 L646.5,170.8 L647.0,179.3 L647.5,186.5 L648.0,193.0 L648.5,198.9 L649.0,204.8 L649.5,210.7 L650.0,216.6 L650.5,215.3 L651.0,207.0 L651.5,198.7 L652.0,190.4 L652.5,182.1 L653.0,172.2 L653.5,161.5 L654.0,149.1 L654.5,138.3 L655.0,128.6 L655.5,122.0 L656.0,117.8 L656.5,115.5 L657.0,117.3 L657.5,120.3 L658.0,125.6 L658.5,132.7 L659.0,140.7 L659.5,150.5 L660.0,159.7 L660.5,167.8 L661.0,174.8 L661.5,181.4 L662.0,188.0 L662.5,194.6 L663.0,201.2 L663.5,195.4 L664.0,184.2 L664.5,172.7 L665.0,158.3 L665.5,142.8 L666.0,131.7 L666.0,288.0 Z" fill="#33cc33"/>
<path d="M67.5,288.0 L67.5,192.3 L68.0,194.4 L68.5,196.6 L69.0,199.2 L69.5,203.7 L70.0,208.6 L70.5,213.6 L71.0,218.7 L71.5,223.8 L72.0,228.9 L72.5,233.9 L73.0,236.9 L73.5,231.5 L74.0,226.1 L74.5,220.6 L75.0,214.9 L75.5,208.2 L76.0,200.3 L76.5,193.1 L77.0,187.1 L77.5,182.7 L78.0,181.0 L78.5,181.8 L79.0,184.0 L79.5,186.3 L80.0,188.5 L80.5,190.8 L81.0,193.5 L81.5,198.2 L82.0,203.2 L82.5,208.6 L83.0,213.9 L83.5,219.2 L84.0,224.6 L84.5,229.9 L85.0,235.2 L85.5,238.4 L86.0,233.0 L86.5,227.5 L87.0,222.1 L87.5,216.2 L88.0,209.4 L88.5,201.3 L89.0,194.4 L89.5,189.1 L90.0,185.5 L90.5,184.0 L91.0,186.1 L91.5,188.2 L92.0,190.3 L92.5,192.4 L93.0,194.5 L93.5,197.0 L94.0,201.4 L94.5,205.9 L95.0,210.9 L95.5,215.9 L96.0,220.9 L96.5,225.9 L97.0,230.8 L97.5,235.8 L98.0,240.8 L98.5,241.3 L99.0,235.1 L99.5,228.8 L100.0,222.5 L100.5,214.8 L101.0,205.6 L101.5,197.9 L102.0,192.4 L102.5,189.7 L103.0,190.4 L103.5,192.6 L104.0,194.9 L104.5,197.2 L105.0,199.5 L105.5,201.9 L106.0,206.6 L106.5,211.5 L107.0,216.9 L107.5,222.3 L108.0,227.7 L108.5,233.1 L109.0,238.4 L109.5,243.8 L110.0,249.2 L110.5,247.3 L111.0,243.5 L111.5,239.8 L112.0,236.0 L112.5,232.2 L113.0,227.6 L113.5,222.5 L114.0,217.0 L114.5,212.3 L115.0,208.3 L115.5,205.3 L116.0,203.8 L116.5,203.4 L117.0,205.2 L117.5,207.0 L118.0,208.8 L118.5,210.6 L119.0,212.9 L119.5,216.7 L120.0,220.8 L120.5,225.1 L121.0,229.4 L121.5,233.7 L122.0,238.0 L122.5,242.3 L123.0,246.6 L123.5,242.2 L124.0,237.9 L124.5,233.5 L125.0,229.1 L125.5,224.5 L126.0,219.2 L126.5,213.0 L127.0,206.7 L127.5,201.4 L128.0,197.1 L128.5,193.6 L129.0,192.3 L129.5,192.5 L130.0,194.6 L130.5,196.8 L131.0,198.9 L131.5,201.1 L132.0,205.3 L132.5,210.1 L133.0,215.1 L133.5,220.2 L134.0,225.3 L134.5,230.4 L135.0,235.4 L135.5,236.1 L136.0,230.1 L136.5,224.1 L137.0,218.1 L137.5,211.7 L138.0,204.4 L138.5,195.6 L139.0,187.6 L139.5,180.7 L140.0,175.9 L140.5,173.5 L141.0,173.5 L141.5,176.0 L142.0,178.5 L142.5,181.0 L143.0,183.5 L143.5,186.4 L144.0,191.7 L144.5,197.2 L145.0,203.1 L145.5,209.1 L146.0,215.0 L146.5,220.9 L147.0,226.8 L147.5,232.8 L148.0,233.8 L148.5,227.6 L149.0,221.4 L149.5,215.2 L150.0,208.3 L150.5,200.4 L151.0,191.2 L151.5,183.5 L152.0,177.5 L152.5,173.5 L153.0,171.8 L153.5,173.8 L154.0,175.7 L154.5,177.7 L155.0,179.6 L155.5,181.6 L156.0,184.0 L156.5,188.1 L157.0,192.4 L157.5,197.0 L158.0,201.6 L158.5,206.2 L159.0,210.9 L159.5,215.5 L160.0,220.1 L160.5,224.8 L161.0,223.3 L161.5,217.9 L162.0,212.4 L162.5,206.9 L163.0,200.2 L163.5,192.2 L164.0,185.2 L164.5,179.8 L165.0,176.5 L165.5,175.8 L166.0,178.1 L166.5,180.4 L167.0,182.7 L167.5,185.1 L168.0,187.4 L168.5,191.0 L169.0,195.8 L169.5,201.1 L170.0,206.6 L170.5,212.1 L171.0,217.5 L171.5,223.0 L172.0,228.5 L172.5,234.0 L173.0,239.5 L173.5,234.3 L174.0,229.0 L174.5,223.8 L175.0,218.5 L175.5,212.1 L176.0,204.8 L176.5,197.5 L177.0,191.2 L177.5,187.1 L178.0,184.9 L178.5,184.8 L179.0,186.9 L179.5,189.1 L180.0,191.2 L180.5,193.3 L181.0,195.4 L181.5,199.1 L182.0,203.5 L182.5,208.4 L183.0,213.4 L183.5,218.4 L184.0,223.3 L184.5,228.3 L185.0,233.3 L185.5,238.3 L186.0,241.1 L186.5,235.1 L187.0,229.1 L187.5,223.1 L188.0,215.9 L188.5,207.5 L189.0,199.5 L189.5,193.3 L190.0,189.5 L190.5,188.7 L191.0,191.0 L191.5,193.4 L192.0,195.8 L192.5,198.1 L193.0,200.5 L193.5,204.7 L194.0,209.7 L194.5,215.2 L195.0,220.8 L195.5,226.3 L196.0,231.9 L196.5,237.5 L197.0,243.1 L197.5,248.7 L198.0,248.5 L198.5,244.4 L199.0,240.4 L199.5,236.4 L200.0,232.3 L200.5,227.5 L201.0,222.2 L201.5,216.2 L202.0,211.0 L202.5,206.3 L203.0,203.1 L203.5,201.1 L204.0,200.0 L204.5,201.8 L205.0,203.7 L205.5,205.6 L206.0,207.4 L206.5,209.3 L207.0,212.2 L207.5,216.1 L208.0,220.3 L208.5,224.7 L209.0,229.1 L209.5,233.4 L210.0,237.8 L210.5,242.2 L211.0,246.6 L211.5,247.1 L212.0,241.9 L212.5,236.7 L213.0,231.5 L213.5,225.7 L214.0,219.0 L214.5,211.3 L215.0,204.8 L215.5,199.8 L216.0,196.4 L216.5,195.0 L217.0,196.6 L217.5,198.1 L218.0,199.7 L218.5,201.3 L219.0,202.8 L219.5,204.8 L220.0,208.1 L220.5,211.5 L221.0,215.2 L221.5,218.9 L222.0,222.6 L222.5,226.3 L223.0,230.0 L223.5,233.7 L224.0,237.4 L224.5,235.5 L225.0,229.8 L225.5,224.0 L226.0,217.8 L226.5,210.4 L227.0,202.2 L227.5,195.6 L228.0,191.3 L228.5,189.7 L229.0,191.6 L229.5,193.4 L230.0,195.3 L230.5,197.2 L231.0,199.1 L231.5,202.0 L232.0,205.9 L232.5,210.2 L233.0,214.7 L233.5,219.1 L234.0,223.5 L234.5,228.0 L235.0,232.4 L235.5,236.8 L236.0,237.5 L236.5,232.5 L237.0,227.6 L237.5,222.6 L238.0,216.8 L238.5,210.1 L239.0,203.1 L239.5,197.1 L240.0,193.2 L240.5,191.3 L241.0,191.8 L241.5,193.3 L242.0,194.9 L242.5,196.5 L243.0,198.1 L243.5,199.6 L244.0,202.2 L244.5,205.6 L245.0,209.1 L245.5,212.8 L246.0,216.6 L246.5,220.3 L247.0,224.0 L247.5,227.8 L248.0,231.5 L248.5,235.2 L249.0,234.1 L249.5,229.7 L250.0,225.3 L250.5,220.9 L251.0,215.7 L251.5,209.7 L252.0,203.6 L252.5,198.4 L253.0,194.9 L253.5,193.4 L254.0,193.9 L254.5,195.7 L255.0,197.4 L255.5,199.2 L256.0,200.9 L256.5,202.7 L257.0,206.3 L257.5,210.0 L258.0,214.1 L258.5,218.3 L259.0,222.4 L259.5,226.5 L260.0,230.7 L260.5,234.8 L261.0,238.9 L261.5,238.0 L262.0,233.6 L262.5,229.2 L263.0,224.8 L263.5,219.4 L264.0,213.0 L264.5,207.3 L265.0,203.0 L265.5,200.4 L266.0,199.7 L266.5,201.2 L267.0,202.6 L267.5,204.1 L268.0,205.5 L268.5,207.0 L269.0,208.4 L269.5,211.1 L270.0,214.1 L270.5,217.4 L271.0,220.8 L271.5,224.3 L272.0,227.7 L272.5,231.1 L273.0,234.6 L273.5,238.0 L274.0,241.5 L274.5,244.9 L275.0,241.1 L275.5,237.3 L276.0,233.5 L276.5,229.1 L277.0,223.7 L277.5,218.8 L278.0,215.0 L278.5,212.9 L279.0,212.8 L279.5,214.2 L280.0,215.6 L280.5,217.0 L281.0,218.4 L281.5,219.8 L282.0,221.5 L282.5,224.4 L283.0,227.4 L283.5,230.6 L284.0,233.9 L284.5,237.2 L285.0,240.4 L285.5,243.7 L286.0,247.0 L286.5,250.2 L287.0,253.5 L287.5,250.3 L288.0,247.2 L288.5,244.0 L289.0,240.3 L289.5,235.8 L290.0,231.7 L290.5,228.6 L291.0,226.8 L291.5,226.7 L292.0,227.6 L292.5,228.5 L293.0,229.4 L293.5,230.2 L294.0,231.2 L294.5,232.3 L295.0,234.2 L295.5,236.1 L296.0,238.2 L296.5,240.3 L297.0,242.5 L297.5,244.6 L298.0,246.7 L298.5,248.8 L299.0,251.0 L299.5,253.1 L300.0,250.4 L300.5,247.6 L301.0,244.9 L301.5,241.6 L302.0,237.8 L302.5,234.2 L303.0,231.5 L303.5,230.0 L304.0,229.8 L304.5,230.6 L305.0,231.4 L305.5,232.2 L306.0,233.0 L306.5,233.8 L307.0,234.7 L307.5,236.4 L308.0,238.0 L308.5,239.9 L309.0,241.8 L309.5,243.7 L310.0,245.6 L310.5,247.5 L311.0,249.4 L311.5,251.3 L312.0,253.1 L312.5,251.5 L313.0,247.4 L313.5,243.3 L314.0,238.6 L314.5,232.8 L315.0,227.7 L315.5,224.2 L316.0,223.0 L316.5,223.8 L317.0,224.7 L317.5,225.5 L318.0,226.4 L318.5,227.2 L319.0,228.1 L319.5,229.8 L320.0,231.6 L320.5,233.6 L321.0,235.6 L321.5,237.6 L322.0,239.5 L322.5,241.5 L323.0,243.5 L323.5,245.5 L324.0,247.5 L324.5,243.6 L325.0,239.6 L325.5,235.7 L326.0,231.5 L326.5,226.6 L327.0,220.8 L327.5,215.7 L328.0,211.7 L328.5,209.1 L329.0,208.0 L329.5,209.2 L330.0,210.5 L330.5,211.7 L331.0,212.9 L331.5,214.2 L332.0,215.4 L332.5,218.0 L333.0,220.5 L333.5,223.4 L334.0,226.3 L334.5,229.3 L335.0,232.2 L335.5,235.1 L336.0,238.0 L336.5,240.9 L337.0,243.8 L337.5,238.6 L338.0,233.5 L338.5,228.3 L339.0,222.1 L339.5,214.8 L340.0,208.1 L340.5,203.3 L341.0,201.0 L341.5,201.3 L342.0,202.9 L342.5,204.5 L343.0,206.1 L343.5,207.6 L344.0,209.2 L344.5,212.0 L345.0,215.3 L345.5,218.9 L346.0,222.7 L346.5,226.4 L347.0,230.1 L347.5,233.8 L348.0,237.5 L348.5,241.2 L349.0,244.9 L349.5,239.9 L350.0,235.0 L350.5,230.0 L351.0,224.5 L351.5,218.1 L352.0,210.9 L352.5,204.9 L353.0,200.8 L353.5,198.8 L354.0,199.2 L354.5,200.6 L355.0,202.0 L355.5,203.4 L356.0,204.8 L356.5,206.2 L357.0,208.4 L357.5,211.3 L358.0,214.4 L358.5,217.8 L359.0,221.2 L359.5,224.5 L360.0,227.9 L360.5,231.2 L361.0,234.6 L361.5,237.9 L362.0,239.7 L362.5,235.3 L363.0,230.9 L363.5,226.4 L364.0,220.9 L364.5,214.5 L365.0,209.3 L365.5,205.8 L366.0,204.6 L366.5,206.0 L367.0,207.3 L367.5,208.7 L368.0,210.1 L368.5,211.4 L369.0,212.8 L369.5,214.6 L370.0,217.4 L370.5,220.3 L371.0,223.5 L371.5,226.8 L372.0,230.0 L372.5,233.2 L373.0,236.5 L373.5,239.7 L374.0,242.9 L374.5,246.2 L375.0,249.4 L375.5,246.3 L376.0,243.1 L376.5,240.0 L377.0,236.8 L377.5,233.1 L378.0,228.9 L378.5,224.3 L379.0,220.5 L379.5,217.4 L380.0,215.2 L380.5,214.4 L381.0,215.4 L381.5,216.9 L382.0,218.4 L382.5,219.9 L383.0,221.4 L383.5,224.0 L384.0,227.1 L384.5,230.6 L385.0,234.2 L385.5,237.8 L386.0,241.3 L386.5,244.9 L387.0,248.4 L387.5,252.0 L388.0,249.0 L388.5,245.9 L389.0,242.9 L389.5,239.6 L390.0,235.7 L390.5,231.2 L391.0,227.5 L391.5,224.8 L392.0,223.3 L392.5,223.2 L393.0,224.3 L393.5,225.3 L394.0,226.4 L394.5,227.5 L395.0,228.5 L395.5,230.0 L396.0,232.2 L396.5,234.5 L397.0,237.0 L397.5,239.5 L398.0,242.0 L398.5,244.6 L399.0,247.1 L399.5,249.6 L400.0,252.1 L400.5,253.3 L401.0,249.4 L401.5,245.6 L402.0,241.7 L402.5,237.8 L403.0,233.3 L403.5,228.5 L404.0,222.7 L404.5,217.6 L405.0,212.9 L405.5,209.8 L406.0,207.8 L406.5,206.7 L407.0,208.5 L407.5,210.2 L408.0,212.0 L408.5,214.1 L409.0,217.8 L409.5,221.9 L410.0,226.1 L410.5,230.3 L411.0,234.5 L411.5,238.7 L412.0,235.6 L412.5,230.7 L413.0,225.8 L413.5,220.9 L414.0,215.7 L414.5,209.7 L415.0,202.8 L415.5,195.9 L416.0,190.0 L416.5,185.7 L417.0,182.5 L417.5,181.2 L418.0,182.8 L418.5,185.1 L419.0,187.4 L419.5,189.7 L420.0,192.0 L420.5,195.9 L421.0,200.8 L421.5,206.2 L422.0,211.7 L422.5,217.2 L423.0,222.7 L423.5,228.1 L424.0,233.6 L424.5,239.1 L425.0,234.5 L425.5,229.9 L426.0,225.3 L426.5,220.7 L427.0,215.7 L427.5,210.0 L428.0,203.3 L428.5,197.0 L429.0,191.4 L429.5,187.4 L430.0,184.5 L430.5,183.3 L431.0,184.9 L431.5,187.2 L432.0,189.6 L432.5,192.0 L433.0,194.3 L433.5,199.3 L434.0,204.5 L434.5,210.1 L435.0,215.7 L435.5,221.2 L436.0,226.8 L436.5,232.4 L437.0,238.0 L437.5,232.8 L438.0,227.6 L438.5,222.4 L439.0,217.3 L439.5,211.0 L440.0,203.8 L440.5,196.5 L441.0,190.2 L441.5,185.8 L442.0,183.2 L442.5,182.4 L443.0,184.6 L443.5,186.7 L444.0,188.9 L444.5,191.0 L445.0,193.2 L445.5,197.3 L446.0,201.9 L446.5,207.0 L447.0,212.0 L447.5,217.1 L448.0,222.2 L448.5,227.3 L449.0,232.3 L449.5,237.4 L450.0,232.3 L450.5,227.2 L451.0,222.1 L451.5,216.5 L452.0,209.8 L452.5,202.4 L453.0,196.2 L453.5,192.1 L454.0,190.1 L454.5,190.7 L455.0,192.6 L455.5,194.6 L456.0,196.5 L456.5,198.5 L457.0,200.4 L457.5,203.3 L458.0,207.4 L458.5,211.7 L459.0,216.3 L459.5,220.9 L460.0,225.6 L460.5,230.2 L461.0,234.8 L461.5,239.4 L462.0,244.0 L462.5,247.0 L463.0,243.7 L463.5,240.4 L464.0,237.1 L464.5,233.8 L465.0,230.1 L465.5,226.0 L466.0,221.1 L466.5,216.6 L467.0,212.6 L467.5,209.8 L468.0,207.8 L468.5,206.9 L469.0,207.9 L469.5,209.5 L470.0,211.0 L470.5,212.5 L471.0,214.1 L471.5,217.2 L472.0,220.5 L472.5,224.1 L473.0,227.8 L473.5,231.4 L474.0,235.0 L474.5,238.6 L475.0,242.3 L475.5,239.1 L476.0,234.2 L476.5,229.3 L477.0,224.3 L477.5,219.1 L478.0,213.1 L478.5,206.1 L479.0,199.2 L479.5,193.2 L480.0,188.9 L480.5,185.7 L481.0,184.4 L481.5,185.7 L482.0,187.6 L482.5,189.6 L483.0,191.6 L483.5,193.5 L484.0,197.5 L484.5,201.7 L485.0,206.4 L485.5,211.0 L486.0,215.7 L486.5,220.3 L487.0,224.9 L487.5,229.6 L488.0,224.7 L488.5,217.4 L489.0,210.1 L489.5,202.8 L490.0,194.3 L490.5,184.6 L491.0,173.9 L491.5,165.0 L492.0,158.3 L492.5,153.8 L493.0,151.8 L493.5,155.0 L494.0,158.2 L494.5,161.4 L495.0,164.7 L495.5,168.6 L496.0,175.3 L496.5,182.5 L497.0,190.1 L497.5,197.7 L498.0,205.3 L498.5,212.9 L499.0,220.5 L499.5,225.5 L500.0,220.2 L500.5,214.9 L501.0,209.5 L501.5,204.2 L502.0,198.4 L502.5,191.9 L503.0,184.4 L503.5,176.6 L504.0,170.1 L504.5,164.6 L505.0,160.3 L505.5,158.4 L506.0,157.7 L506.5,160.4 L507.0,163.2 L507.5,165.9 L508.0,168.6 L508.5,171.3 L509.0,177.0 L509.5,182.9 L510.0,189.3 L510.5,195.7 L511.0,202.1 L511.5,208.5 L512.0,214.9 L512.5,221.3 L513.0,222.2 L513.5,214.9 L514.0,207.7 L514.5,200.4 L515.0,192.0 L515.5,182.2 L516.0,171.9 L516.5,163.3 L517.0,157.5 L517.5,154.8 L518.0,155.8 L518.5,158.7 L519.0,161.7 L519.5,164.6 L520.0,167.6 L520.5,171.9 L521.0,178.0 L521.5,184.7 L522.0,191.7 L522.5,198.7 L523.0,205.6 L523.5,212.6 L524.0,219.6 L524.5,226.5 L525.0,223.5 L525.5,217.9 L526.0,212.4 L526.5,206.9 L527.0,201.0 L527.5,194.2 L528.0,186.3 L528.5,178.5 L529.0,171.8 L529.5,166.9 L530.0,163.3 L530.5,161.8 L531.0,163.7 L531.5,166.4 L532.0,169.1 L532.5,171.9 L533.0,174.6 L533.5,179.2 L534.0,184.9 L534.5,191.3 L535.0,197.7 L535.5,204.2 L536.0,210.6 L536.5,217.1 L537.0,223.6 L537.5,230.0 L538.0,224.3 L538.5,218.7 L539.0,213.1 L539.5,207.4 L540.0,200.6 L540.5,192.8 L541.0,184.8 L541.5,177.9 L542.0,173.1 L542.5,170.2 L543.0,169.5 L543.5,172.2 L544.0,174.8 L544.5,177.5 L545.0,180.1 L545.5,182.8 L546.0,187.1 L546.5,192.6 L547.0,198.7 L547.5,204.9 L548.0,211.2 L548.5,217.4 L549.0,223.7 L549.5,229.9 L550.0,236.2 L550.5,240.4 L551.0,236.3 L551.5,232.3 L552.0,228.2 L552.5,224.1 L553.0,219.5 L553.5,214.4 L554.0,208.4 L554.5,203.0 L555.0,198.1 L555.5,194.9 L556.0,192.7 L556.5,191.6 L557.0,193.7 L557.5,195.7 L558.0,197.8 L558.5,199.8 L559.0,202.7 L559.5,207.0 L560.0,211.7 L560.5,216.6 L561.0,221.5 L561.5,226.3 L562.0,231.2 L562.5,236.1 L563.0,234.8 L563.5,229.5 L564.0,224.2 L564.5,218.9 L565.0,213.5 L565.5,207.0 L566.0,199.7 L566.5,192.0 L567.0,185.5 L567.5,180.4 L568.0,176.5 L568.5,175.0 L569.0,175.5 L569.5,177.4 L570.0,179.3 L570.5,181.2 L571.0,183.1 L571.5,185.9 L572.0,189.8 L572.5,194.2 L573.0,198.6 L573.5,203.1 L574.0,207.6 L574.5,212.1 L575.0,216.5 L575.5,221.0 L576.0,216.7 L576.5,210.2 L577.0,203.7 L577.5,197.2 L578.0,190.3 L578.5,182.3 L579.0,173.1 L579.5,163.9 L580.0,156.0 L580.5,150.3 L581.0,146.2 L581.5,144.4 L582.0,146.8 L582.5,150.2 L583.0,153.7 L583.5,157.2 L584.0,161.5 L584.5,168.7 L585.0,176.6 L585.5,184.8 L586.0,193.0 L586.5,201.2 L587.0,209.3 L587.5,217.5 L588.0,216.8 L588.5,210.1 L589.0,203.5 L589.5,196.8 L590.0,189.8 L590.5,181.6 L591.0,172.1 L591.5,162.8 L592.0,154.7 L592.5,149.1 L593.0,145.3 L593.5,143.5 L594.0,146.7 L594.5,149.9 L595.0,153.1 L595.5,156.3 L596.0,159.5 L596.5,165.5 L597.0,172.3 L597.5,179.8 L598.0,187.4 L598.5,194.9 L599.0,202.5 L599.5,210.0 L600.0,217.6 L600.5,222.1 L601.0,214.5 L601.5,207.0 L602.0,199.4 L602.5,191.2 L603.0,181.8 L603.5,170.5 L604.0,161.0 L604.5,153.5 L605.0,148.6 L605.5,146.5 L606.0,149.5 L606.5,152.6 L607.0,155.6 L607.5,158.7 L608.0,161.7 L608.5,166.5 L609.0,172.8 L609.5,179.8 L610.0,187.0 L610.5,194.2 L611.0,201.3 L611.5,208.5 L612.0,215.7 L612.5,222.9 L613.0,224.8 L613.5,218.7 L614.0,212.6 L614.5,206.5 L615.0,200.4 L615.5,193.2 L616.0,185.2 L616.5,176.2 L617.0,168.4 L617.5,161.7 L618.0,156.8 L618.5,154.2 L619.0,153.5 L619.5,156.6 L620.0,159.8 L620.5,162.9 L621.0,166.0 L621.5,169.4 L622.0,176.0 L622.5,182.8 L623.0,190.2 L623.5,197.6 L624.0,204.9 L624.5,212.3 L625.0,219.7 L625.5,227.1 L626.0,226.7 L626.5,221.1 L627.0,215.6 L627.5,210.0 L628.0,203.8 L628.5,196.7 L629.0,188.5 L629.5,181.5 L630.0,175.9 L630.5,171.9 L631.0,170.4 L631.5,172.1 L632.0,174.6 L632.5,177.1 L633.0,179.6 L633.5,182.2 L634.0,184.9 L634.5,190.2 L635.0,195.6 L635.5,201.5 L636.0,207.4 L636.5,213.4 L637.0,219.3 L637.5,225.2 L638.0,231.2 L638.5,237.1 L639.0,236.5 L639.5,231.5 L640.0,226.4 L640.5,221.4 L641.0,215.7 L641.5,209.2 L642.0,201.7 L642.5,195.6 L643.0,190.8 L643.5,187.7 L644.0,186.3 L644.5,188.2 L645.0,190.1 L645.5,192.1 L646.0,194.0 L646.5,195.9 L647.0,199.2 L647.5,203.3 L648.0,207.8 L648.5,212.3 L649.0,216.8 L649.5,221.4 L650.0,225.9 L650.5,230.4 L651.0,235.0 L651.5,231.3 L652.0,225.5 L652.5,219.8 L653.0,214.0 L653.5,207.8 L654.0,200.7 L654.5,192.3 L655.0,184.5 L655.5,177.5 L656.0,172.8 L656.5,169.6 L657.0,168.0 L657.5,170.2 L658.0,172.5 L658.5,174.7 L659.0,177.0 L659.5,179.2 L660.0,183.3 L660.5,188.0 L661.0,193.3 L661.5,198.6 L662.0,203.9 L662.5,209.2 L663.0,214.5 L663.5,219.8 L664.0,225.1 L664.5,218.9 L665.0,212.8 L665.5,206.1 L666.0,197.8 L666.0,288.0 Z" fill="#5555cc"/>
<path d="M67.5,288.0 L67.5,302.8 L68.0,302.6 L68.5,302.4 L69.0,302.2 L69.5,302.1 L70.0,302.2 L70.5,303.2 L71.0,304.3 L71.5,305.4 L72.0,306.5 L72.5,307.8 L73.0,309.3 L73.5,310.9 L74.0,312.2 L74.5,313.2 L75.0,313.8 L75.5,314.1 L76.0,313.9 L76.5,313.5 L77.0,312.8 L77.5,311.9 L78.0,310.8 L78.5,309.5 L79.0,308.2 L79.5,307.1 L80.0,306.1 L80.5,305.2 L81.0,304.3 L81.5,303.4 L82.0,302.5 L82.5,302.0 L83.0,303.1 L83.5,304.1 L84.0,305.2 L84.5,306.3 L85.0,307.7 L85.5,309.2 L86.0,310.7 L86.5,311.9 L87.0,312.8 L87.5,313.2 L88.0,313.3 L88.5,313.1 L89.0,312.6 L89.5,312.0 L90.0,311.1 L90.5,310.1 L91.0,308.9 L91.5,307.7 L92.0,306.7 L92.5,305.7 L93.0,304.9 L93.5,304.0 L94.0,303.2 L94.5,302.4 L95.0,301.6 L95.5,301.4 L96.0,302.3 L96.5,303.2 L97.0,304.2 L97.5,305.1 L98.0,306.3 L98.5,307.6 L99.0,308.8 L99.5,309.8 L100.0,310.5 L100.5,310.8 L101.0,310.8 L101.5,310.5 L102.0,309.8 L102.5,309.0 L103.0,307.9 L103.5,306.7 L104.0,305.4 L104.5,304.4 L105.0,303.4 L105.5,302.6 L106.0,301.7 L106.5,300.8 L107.0,299.9 L107.5,300.2 L108.0,300.7 L108.5,301.2 L109.0,301.7 L109.5,302.2 L110.0,302.8 L110.5,303.4 L111.0,304.1 L111.5,304.8 L112.0,305.5 L112.5,306.2 L113.0,306.7 L113.5,307.1 L114.0,307.4 L114.5,307.5 L115.0,307.5 L115.5,307.2 L116.0,306.6 L116.5,305.7 L117.0,304.6 L117.5,303.6 L118.0,302.7 L118.5,301.9 L119.0,301.2 L119.5,300.4 L120.0,299.7 L120.5,300.4 L121.0,301.2 L121.5,302.0 L122.0,302.8 L122.5,303.5 L123.0,304.4 L123.5,305.4 L124.0,306.5 L124.5,307.6 L125.0,308.6 L125.5,309.4 L126.0,310.0 L126.5,310.3 L127.0,310.5 L127.5,310.3 L128.0,309.7 L128.5,308.9 L129.0,307.8 L129.5,306.5 L130.0,305.4 L130.5,304.4 L131.0,303.6 L131.5,302.7 L132.0,301.8 L132.5,301.7 L133.0,302.6 L133.5,303.6 L134.0,304.5 L134.5,305.5 L135.0,306.4 L135.5,307.6 L136.0,308.9 L136.5,310.3 L137.0,311.5 L137.5,312.7 L138.0,313.6 L138.5,314.3 L139.0,314.6 L139.5,314.7 L140.0,314.4 L140.5,313.5 L141.0,312.3 L141.5,310.8 L142.0,309.1 L142.5,307.4 L143.0,306.0 L143.5,304.8 L144.0,303.6 L144.5,302.4 L145.0,301.9 L145.5,302.8 L146.0,303.6 L146.5,304.4 L147.0,305.2 L147.5,306.1 L148.0,307.1 L148.5,308.3 L149.0,309.4 L149.5,310.4 L150.0,311.1 L150.5,311.7 L151.0,311.9 L151.5,311.9 L152.0,311.6 L152.5,310.9 L153.0,310.1 L153.5,309.1 L154.0,307.9 L154.5,306.6 L155.0,305.5 L155.5,304.6 L156.0,303.7 L156.5,302.9 L157.0,302.0 L157.5,301.1 L158.0,301.2 L158.5,302.0 L159.0,302.8 L159.5,303.6 L160.0,304.4 L160.5,305.3 L161.0,306.3 L161.5,307.5 L162.0,308.5 L162.5,309.5 L163.0,310.2 L163.5,310.7 L164.0,310.9 L164.5,310.9 L165.0,310.6 L165.5,309.9 L166.0,308.9 L166.5,307.8 L167.0,306.5 L167.5,305.4 L168.0,304.4 L168.5,303.5 L169.0,302.7 L169.5,301.8 L170.0,300.9 L170.5,301.9 L171.0,302.9 L171.5,303.9 L172.0,304.9 L172.5,305.9 L173.0,307.1 L173.5,308.6 L174.0,309.9 L174.5,311.1 L175.0,311.9 L175.5,312.4 L176.0,312.7 L176.5,312.5 L177.0,312.1 L177.5,311.4 L178.0,310.5 L178.5,309.5 L179.0,308.2 L179.5,307.0 L180.0,305.9 L180.5,304.9 L181.0,304.1 L181.5,303.2 L182.0,302.4 L182.5,301.5 L183.0,301.0 L183.5,301.9 L184.0,302.7 L184.5,303.6 L185.0,304.4 L185.5,305.5 L186.0,306.7 L186.5,307.9 L187.0,309.0 L187.5,309.8 L188.0,310.3 L188.5,310.5 L189.0,310.2 L189.5,309.8 L190.0,309.1 L190.5,308.0 L191.0,306.8 L191.5,305.5 L192.0,304.4 L192.5,303.3 L193.0,302.4 L193.5,301.5 L194.0,300.6 L194.5,299.7 L195.0,299.6 L195.5,300.1 L196.0,300.5 L196.5,301.0 L197.0,301.5 L197.5,301.9 L198.0,302.5 L198.5,303.0 L199.0,303.7 L199.5,304.4 L200.0,304.9 L200.5,305.4 L201.0,305.8 L201.5,306.0 L202.0,306.1 L202.5,306.1 L203.0,305.9 L203.5,305.5 L204.0,304.9 L204.5,304.2 L205.0,303.3 L205.5,302.6 L206.0,301.8 L206.5,301.3 L207.0,300.7 L207.5,300.1 L208.0,299.5 L208.5,299.5 L209.0,300.3 L209.5,301.2 L210.0,302.0 L210.5,302.8 L211.0,303.7 L211.5,304.7 L212.0,305.9 L212.5,307.0 L213.0,308.0 L213.5,308.8 L214.0,309.4 L214.5,309.7 L215.0,309.7 L215.5,309.5 L216.0,309.0 L216.5,308.4 L217.0,307.6 L217.5,306.6 L218.0,305.6 L218.5,304.7 L219.0,303.9 L219.5,303.2 L220.0,302.5 L220.5,301.8 L221.0,301.1 L221.5,301.5 L222.0,302.6 L222.5,303.6 L223.0,304.7 L223.5,305.9 L224.0,307.2 L224.5,308.8 L225.0,310.3 L225.5,311.6 L226.0,312.5 L226.5,313.1 L227.0,313.4 L227.5,313.1 L228.0,312.5 L228.5,311.7 L229.0,310.4 L229.5,309.0 L230.0,307.5 L230.5,306.3 L231.0,305.2 L231.5,304.1 L232.0,303.1 L232.5,302.1 L233.0,301.8 L233.5,302.8 L234.0,303.7 L234.5,304.6 L235.0,305.5 L235.5,306.6 L236.0,307.8 L236.5,309.2 L237.0,310.4 L237.5,311.4 L238.0,312.1 L238.5,312.5 L239.0,312.6 L239.5,312.4 L240.0,311.9 L240.5,311.3 L241.0,310.3 L241.5,309.2 L242.0,307.9 L242.5,306.8 L243.0,305.7 L243.5,304.8 L244.0,303.9 L244.5,303.1 L245.0,302.2 L245.5,301.3 L246.0,301.5 L246.5,302.4 L247.0,303.2 L247.5,304.0 L248.0,304.9 L248.5,305.9 L249.0,307.1 L249.5,308.3 L250.0,309.4 L250.5,310.2 L251.0,310.9 L251.5,311.2 L252.0,311.2 L252.5,311.0 L253.0,310.3 L253.5,309.6 L254.0,308.5 L254.5,307.3 L255.0,305.9 L255.5,304.9 L256.0,303.9 L256.5,303.0 L257.0,302.1 L257.5,301.2 L258.0,300.3 L258.5,300.4 L259.0,301.0 L259.5,301.7 L260.0,302.4 L260.5,303.1 L261.0,303.9 L261.5,304.8 L262.0,305.8 L262.5,306.6 L263.0,307.2 L263.5,307.7 L264.0,307.9 L264.5,307.9 L265.0,307.7 L265.5,307.3 L266.0,306.8 L266.5,306.0 L267.0,305.2 L267.5,304.2 L268.0,303.4 L268.5,302.6 L269.0,301.8 L269.5,301.2 L270.0,300.6 L270.5,299.9 L271.0,299.3 L271.5,298.6 L272.0,299.2 L272.5,299.8 L273.0,300.4 L273.5,301.1 L274.0,301.8 L274.5,302.5 L275.0,303.4 L275.5,304.2 L276.0,304.8 L276.5,305.3 L277.0,305.4 L277.5,305.4 L278.0,305.2 L278.5,304.8 L279.0,304.3 L279.5,303.6 L280.0,302.8 L280.5,301.9 L281.0,301.2 L281.5,300.5 L282.0,299.9 L282.5,299.3 L283.0,298.8 L283.5,298.2 L284.0,297.6 L284.5,298.1 L285.0,298.5 L285.5,298.9 L286.0,299.4 L286.5,299.8 L287.0,300.4 L287.5,301.0 L288.0,301.7 L288.5,302.2 L289.0,302.7 L289.5,303.1 L290.0,303.3 L290.5,303.4 L291.0,303.2 L291.5,303.0 L292.0,302.5 L292.5,301.9 L293.0,301.2 L293.5,300.4 L294.0,299.7 L294.5,299.1 L295.0,298.6 L295.5,298.0 L296.0,297.5 L296.5,297.0 L297.0,297.5 L297.5,297.9 L298.0,298.4 L298.5,298.9 L299.0,299.5 L299.5,300.1 L300.0,300.8 L300.5,301.4 L301.0,302.0 L301.5,302.4 L302.0,302.6 L302.5,302.7 L303.0,302.6 L303.5,302.3 L304.0,302.0 L304.5,301.5 L305.0,300.9 L305.5,300.2 L306.0,299.6 L306.5,299.1 L307.0,298.6 L307.5,298.2 L308.0,297.7 L308.5,297.3 L309.0,296.8 L309.5,296.9 L310.0,297.3 L310.5,297.7 L311.0,298.1 L311.5,298.6 L312.0,299.0 L312.5,299.5 L313.0,300.1 L313.5,300.7 L314.0,301.2 L314.5,301.6 L315.0,301.8 L315.5,301.9 L316.0,301.9 L316.5,301.7 L317.0,301.4 L317.5,300.8 L318.0,300.2 L318.5,299.5 L319.0,299.0 L319.5,298.5 L320.0,298.1 L320.5,297.6 L321.0,297.1 L321.5,297.7 L322.0,298.3 L322.5,298.9 L323.0,299.5 L323.5,300.1 L324.0,300.8 L324.5,301.6 L325.0,302.5 L325.5,303.2 L326.0,303.9 L326.5,304.4 L327.0,304.6 L327.5,304.8 L328.0,304.7 L328.5,304.4 L329.0,304.0 L329.5,303.5 L330.0,302.8 L330.5,302.1 L331.0,301.4 L331.5,300.8 L332.0,300.3 L332.5,299.8 L333.0,299.3 L333.5,298.8 L334.0,298.2 L334.5,298.9 L335.0,299.6 L335.5,300.3 L336.0,301.0 L336.5,301.7 L337.0,302.5 L337.5,303.5 L338.0,304.5 L338.5,305.3 L339.0,306.0 L339.5,306.6 L340.0,306.9 L340.5,307.0 L341.0,306.8 L341.5,306.2 L342.0,305.5 L342.5,304.6 L343.0,303.6 L343.5,302.6 L344.0,301.7 L344.5,301.0 L345.0,300.2 L345.5,299.5 L346.0,298.8 L346.5,299.4 L347.0,299.9 L347.5,300.5 L348.0,301.1 L348.5,301.7 L349.0,302.4 L349.5,303.2 L350.0,304.1 L350.5,304.9 L351.0,305.6 L351.5,306.2 L352.0,306.7 L352.5,306.9 L353.0,307.0 L353.5,306.8 L354.0,306.3 L354.5,305.7 L355.0,304.8 L355.5,303.9 L356.0,302.9 L356.5,302.0 L357.0,301.2 L357.5,300.5 L358.0,299.8 L358.5,299.1 L359.0,298.7 L359.5,299.2 L360.0,299.7 L360.5,300.2 L361.0,300.7 L361.5,301.2 L362.0,301.8 L362.5,302.5 L363.0,303.2 L363.5,304.0 L364.0,304.6 L364.5,305.2 L365.0,305.6 L365.5,306.0 L366.0,306.1 L366.5,306.1 L367.0,305.9 L367.5,305.4 L368.0,304.7 L368.5,303.8 L369.0,302.8 L369.5,301.8 L370.0,301.0 L370.5,300.3 L371.0,299.6 L371.5,298.9 L372.0,298.2 L372.5,298.7 L373.0,299.2 L373.5,299.8 L374.0,300.2 L374.5,300.8 L375.0,301.3 L375.5,301.9 L376.0,302.7 L376.5,303.4 L377.0,304.0 L377.5,304.6 L378.0,305.0 L378.5,305.3 L379.0,305.4 L379.5,305.4 L380.0,305.1 L380.5,304.5 L381.0,303.7 L381.5,302.7 L382.0,301.7 L382.5,300.9 L383.0,300.2 L383.5,299.5 L384.0,298.8 L384.5,298.1 L385.0,298.8 L385.5,299.4 L386.0,300.1 L386.5,300.8 L387.0,301.7 L387.5,302.6 L388.0,303.6 L388.5,304.4 L389.0,305.0 L389.5,305.4 L390.0,305.5 L390.5,305.4 L391.0,305.1 L391.5,304.8 L392.0,304.3 L392.5,303.8 L393.0,303.1 L393.5,302.4 L394.0,301.8 L394.5,301.3 L395.0,300.8 L395.5,300.3 L396.0,299.9 L396.5,299.4 L397.0,298.9 L397.5,298.7 L398.0,299.4 L398.5,300.0 L399.0,300.7 L399.5,301.3 L400.0,302.0 L400.5,302.8 L401.0,303.6 L401.5,304.6 L402.0,305.4 L402.5,306.2 L403.0,306.8 L403.5,307.4 L404.0,307.6 L404.5,307.6 L405.0,307.4 L405.5,306.6 L406.0,305.6 L406.5,304.4 L407.0,303.4 L407.5,302.5 L408.0,301.7 L408.5,300.8 L409.0,301.5 L409.5,302.6 L410.0,303.7 L410.5,304.8 L411.0,305.9 L411.5,307.2 L412.0,308.6 L412.5,310.2 L413.0,311.6 L413.5,312.9 L414.0,313.8 L414.5,314.4 L415.0,314.7 L415.5,314.6 L416.0,314.2 L416.5,313.5 L417.0,312.5 L417.5,311.3 L418.0,309.9 L418.5,308.6 L419.0,307.4 L419.5,306.4 L420.0,305.5 L420.5,304.5 L421.0,303.6 L421.5,302.6 L422.0,303.7 L422.5,304.8 L423.0,306.0 L423.5,307.1 L424.0,308.3 L424.5,309.7 L425.0,311.3 L425.5,312.9 L426.0,314.2 L426.5,315.2 L427.0,315.9 L427.5,316.2 L428.0,316.1 L428.5,315.7 L429.0,314.9 L429.5,313.8 L430.0,312.5 L430.5,311.0 L431.0,309.6 L431.5,308.3 L432.0,307.2 L432.5,306.2 L433.0,305.2 L433.5,304.1 L434.0,303.1 L434.5,304.3 L435.0,305.4 L435.5,306.6 L436.0,307.8 L436.5,309.1 L437.0,310.6 L437.5,312.4 L438.0,313.9 L438.5,315.3 L439.0,316.2 L439.5,316.7 L440.0,316.9 L440.5,316.6 L441.0,316.0 L441.5,315.2 L442.0,313.9 L442.5,312.5 L443.0,310.9 L443.5,309.5 L444.0,308.2 L444.5,307.1 L445.0,306.0 L445.5,304.9 L446.0,303.8 L446.5,302.8 L447.0,303.8 L447.5,304.8 L448.0,305.8 L448.5,306.8 L449.0,308.0 L449.5,309.3 L450.0,310.8 L450.5,312.1 L451.0,313.3 L451.5,314.1 L452.0,314.6 L452.5,314.8 L453.0,314.5 L453.5,314.0 L454.0,313.3 L454.5,312.2 L455.0,311.1 L455.5,309.7 L456.0,308.4 L456.5,307.2 L457.0,306.1 L457.5,305.2 L458.0,304.3 L458.5,303.3 L459.0,302.4 L459.5,301.8 L460.0,302.5 L460.5,303.3 L461.0,304.0 L461.5,304.8 L462.0,305.5 L462.5,306.5 L463.0,307.4 L463.5,308.6 L464.0,309.6 L464.5,310.5 L465.0,311.1 L465.5,311.7 L466.0,311.9 L466.5,311.9 L467.0,311.6 L467.5,310.9 L468.0,310.0 L468.5,308.9 L469.0,307.6 L469.5,306.4 L470.0,305.3 L470.5,304.4 L471.0,303.5 L471.5,302.6 L472.0,301.6 L472.5,302.2 L473.0,303.2 L473.5,304.2 L474.0,305.2 L474.5,306.1 L475.0,307.3 L475.5,308.6 L476.0,310.0 L476.5,311.3 L477.0,312.4 L477.5,313.2 L478.0,313.8 L478.5,314.1 L479.0,313.9 L479.5,313.5 L480.0,312.8 L480.5,311.7 L481.0,310.5 L481.5,309.2 L482.0,308.0 L482.5,306.9 L483.0,306.0 L483.5,305.1 L484.0,304.2 L484.5,303.3 L485.0,304.0 L485.5,305.2 L486.0,306.4 L486.5,307.5 L487.0,308.7 L487.5,310.0 L488.0,311.5 L488.5,313.2 L489.0,314.8 L489.5,316.3 L490.0,317.4 L490.5,318.4 L491.0,318.9 L491.5,319.2 L492.0,318.8 L492.5,317.7 L493.0,316.4 L493.5,314.7 L494.0,312.4 L494.5,310.0 L495.0,308.4 L495.5,306.8 L496.0,305.3 L496.5,304.3 L497.0,305.5 L497.5,306.7 L498.0,307.9 L498.5,309.2 L499.0,310.6 L499.5,312.2 L500.0,314.0 L500.5,315.5 L501.0,316.8 L501.5,317.8 L502.0,318.2 L502.5,318.3 L503.0,318.0 L503.5,317.5 L504.0,316.7 L504.5,315.6 L505.0,314.5 L505.5,313.1 L506.0,311.6 L506.5,310.4 L507.0,309.2 L507.5,308.2 L508.0,307.2 L508.5,306.3 L509.0,305.3 L509.5,304.3 L510.0,304.2 L510.5,305.4 L511.0,306.5 L511.5,307.7 L512.0,308.9 L512.5,310.2 L513.0,311.8 L513.5,313.5 L514.0,315.0 L514.5,316.2 L515.0,317.1 L515.5,317.5 L516.0,317.6 L516.5,317.2 L517.0,316.3 L517.5,315.0 L518.0,313.5 L518.5,311.6 L519.0,310.0 L519.5,308.5 L520.0,307.2 L520.5,306.0 L521.0,304.7 L521.5,303.5 L522.0,304.0 L522.5,304.9 L523.0,305.8 L523.5,306.7 L524.0,307.6 L524.5,308.6 L525.0,309.7 L525.5,310.9 L526.0,312.3 L526.5,313.4 L527.0,314.6 L527.5,315.3 L528.0,315.9 L528.5,316.1 L529.0,316.2 L529.5,315.8 L530.0,314.9 L530.5,313.6 L531.0,312.1 L531.5,310.4 L532.0,308.8 L532.5,307.4 L533.0,306.2 L533.5,305.0 L534.0,303.8 L534.5,302.6 L535.0,303.6 L535.5,304.6 L536.0,305.6 L536.5,306.6 L537.0,307.7 L537.5,308.9 L538.0,310.4 L538.5,311.8 L539.0,313.0 L539.5,313.8 L540.0,314.5 L540.5,314.7 L541.0,314.6 L541.5,314.2 L542.0,313.5 L542.5,312.5 L543.0,311.3 L543.5,309.9 L544.0,308.4 L544.5,307.2 L545.0,306.1 L545.5,305.1 L546.0,304.1 L546.5,303.1 L547.0,302.1 L547.5,301.4 L548.0,302.1 L548.5,302.7 L549.0,303.4 L549.5,304.1 L550.0,304.7 L550.5,305.5 L551.0,306.4 L551.5,307.3 L552.0,308.2 L552.5,309.0 L553.0,309.6 L553.5,310.1 L554.0,310.4 L554.5,310.4 L555.0,310.2 L555.5,309.5 L556.0,308.6 L556.5,307.4 L557.0,306.1 L557.5,305.0 L558.0,304.0 L558.5,303.1 L559.0,302.2 L559.5,301.2 L560.0,301.4 L560.5,302.2 L561.0,303.1 L561.5,304.0 L562.0,304.8 L562.5,305.7 L563.0,306.8 L563.5,307.9 L564.0,309.2 L564.5,310.3 L565.0,311.3 L565.5,312.0 L566.0,312.6 L566.5,312.9 L567.0,312.9 L567.5,312.6 L568.0,312.0 L568.5,311.1 L569.0,310.0 L569.5,308.6 L570.0,307.5 L570.5,306.4 L571.0,305.5 L571.5,304.6 L572.0,303.7 L572.5,302.8 L573.0,303.5 L573.5,304.6 L574.0,305.7 L574.5,306.8 L575.0,307.9 L575.5,309.1 L576.0,310.4 L576.5,311.9 L577.0,313.6 L577.5,315.0 L578.0,316.3 L578.5,317.2 L579.0,317.9 L579.5,318.2 L580.0,318.2 L580.5,317.7 L581.0,316.5 L581.5,315.0 L582.0,313.2 L582.5,310.8 L583.0,308.9 L583.5,307.4 L584.0,305.9 L584.5,304.5 L585.0,304.6 L585.5,305.8 L586.0,306.9 L586.5,308.1 L587.0,309.3 L587.5,310.7 L588.0,312.2 L588.5,314.0 L589.0,315.4 L589.5,316.7 L590.0,317.7 L590.5,318.1 L591.0,318.3 L591.5,318.0 L592.0,317.4 L592.5,316.5 L593.0,315.2 L593.5,313.7 L594.0,312.1 L594.5,310.6 L595.0,309.2 L595.5,308.1 L596.0,307.0 L596.5,305.9 L597.0,304.8 L597.5,304.1 L598.0,305.3 L598.5,306.5 L599.0,307.8 L599.5,309.0 L600.0,310.4 L600.5,311.9 L601.0,313.7 L601.5,315.3 L602.0,316.6 L602.5,317.6 L603.0,318.1 L603.5,318.3 L604.0,318.0 L604.5,317.3 L605.0,316.4 L605.5,315.0 L606.0,313.5 L606.5,311.8 L607.0,310.4 L607.5,309.0 L608.0,307.9 L608.5,306.7 L609.0,305.6 L609.5,304.4 L610.0,304.1 L610.5,305.1 L611.0,306.1 L611.5,307.1 L612.0,308.1 L612.5,309.1 L613.0,310.4 L613.5,311.7 L614.0,313.2 L614.5,314.5 L615.0,315.7 L615.5,316.5 L616.0,317.3 L616.5,317.5 L617.0,317.6 L617.5,317.2 L618.0,316.2 L618.5,314.9 L619.0,313.4 L619.5,311.6 L620.0,309.7 L620.5,308.1 L621.0,306.8 L621.5,305.5 L622.0,304.2 L622.5,303.0 L623.0,303.0 L623.5,303.8 L624.0,304.7 L624.5,305.6 L625.0,306.5 L625.5,307.5 L626.0,308.8 L626.5,310.0 L627.0,311.1 L627.5,311.8 L628.0,312.4 L628.5,312.6 L629.0,312.5 L629.5,312.3 L630.0,311.6 L630.5,310.8 L631.0,309.8 L631.5,308.7 L632.0,307.4 L632.5,306.3 L633.0,305.2 L633.5,304.4 L634.0,303.5 L634.5,302.7 L635.0,301.9 L635.5,301.0 L636.0,301.1 L636.5,301.8 L637.0,302.5 L637.5,303.2 L638.0,303.9 L638.5,304.7 L639.0,305.6 L639.5,306.6 L640.0,307.6 L640.5,308.4 L641.0,309.1 L641.5,309.5 L642.0,309.7 L642.5,309.7 L643.0,309.4 L643.5,308.8 L644.0,308.1 L644.5,307.1 L645.0,306.0 L645.5,305.1 L646.0,304.2 L646.5,303.5 L647.0,302.8 L647.5,302.0 L648.0,301.3 L648.5,301.9 L649.0,302.9 L649.5,303.9 L650.0,304.8 L650.5,305.8 L651.0,306.9 L651.5,308.1 L652.0,309.5 L652.5,310.9 L653.0,312.1 L653.5,313.2 L654.0,314.0 L654.5,314.5 L655.0,314.8 L655.5,314.6 L656.0,314.1 L656.5,313.2 L657.0,312.0 L657.5,310.6 L658.0,309.0 L658.5,307.7 L659.0,306.5 L659.5,305.4 L660.0,304.4 L660.5,303.3 L661.0,302.3 L661.5,303.9 L662.0,305.5 L662.5,307.2 L663.0,309.0 L663.5,311.1 L664.0,313.5 L664.5,315.5 L665.0,316.9 L665.5,317.7 L666.0,318.0 L666.0,288.0 Z" fill="#f8c53c"/>
<path d="M67.5,288.0 L67.5,298.4 L68.0,297.8 L68.5,297.0 L69.0,296.2 L69.5,295.5 L70.0,294.9 L70.5,294.4 L71.0,293.8 L71.5,295.0 L72.0,296.7 L72.5,298.4 L73.0,300.1 L73.5,302.1 L74.0,304.4 L74.5,306.8 L75.0,308.8 L75.5,310.2 L76.0,310.9 L76.5,311.1 L77.0,310.7 L77.5,310.0 L78.0,309.1 L78.5,307.7 L79.0,306.3 L79.5,304.5 L80.0,302.8 L80.5,301.3 L81.0,299.9 L81.5,298.7 L82.0,297.5 L82.5,296.3 L83.0,295.1 L83.5,294.0 L84.0,295.0 L84.5,296.7 L85.0,298.4 L85.5,300.1 L86.0,302.1 L86.5,304.5 L87.0,306.8 L87.5,308.6 L88.0,309.9 L88.5,310.4 L89.0,310.3 L89.5,310.0 L90.0,309.2 L90.5,308.4 L91.0,307.1 L91.5,305.8 L92.0,304.2 L92.5,302.6 L93.0,301.3 L93.5,300.0 L94.0,298.9 L94.5,297.8 L95.0,296.7 L95.5,295.7 L96.0,294.6 L96.5,293.7 L97.0,295.0 L97.5,296.4 L98.0,297.9 L98.5,299.4 L99.0,301.2 L99.5,303.3 L100.0,305.2 L100.5,306.6 L101.0,307.6 L101.5,308.0 L102.0,307.7 L102.5,307.2 L103.0,306.4 L103.5,305.2 L104.0,303.9 L104.5,302.4 L105.0,300.8 L105.5,299.5 L106.0,298.3 L106.5,297.2 L107.0,296.1 L107.5,295.0 L108.0,294.0 L108.5,293.6 L109.0,294.4 L109.5,295.2 L110.0,296.0 L110.5,296.8 L111.0,297.6 L111.5,298.6 L112.0,299.6 L112.5,300.7 L113.0,301.8 L113.5,302.8 L114.0,303.6 L114.5,304.2 L115.0,304.5 L115.5,304.7 L116.0,304.4 L116.5,303.9 L117.0,303.0 L117.5,301.8 L118.0,300.4 L118.5,298.9 L119.0,297.7 L119.5,296.7 L120.0,295.7 L120.5,294.7 L121.0,293.8 L121.5,293.9 L122.0,295.0 L122.5,296.1 L123.0,297.2 L123.5,298.3 L124.0,299.5 L124.5,300.9 L125.0,302.5 L125.5,304.0 L126.0,305.3 L126.5,306.3 L127.0,307.1 L127.5,307.4 L128.0,307.5 L128.5,307.1 L129.0,306.1 L129.5,304.9 L130.0,303.4 L130.5,301.5 L131.0,299.9 L131.5,298.5 L132.0,297.2 L132.5,296.0 L133.0,294.8 L133.5,294.0 L134.0,294.9 L134.5,296.3 L135.0,297.6 L135.5,299.0 L136.0,300.4 L136.5,302.1 L137.0,303.9 L137.5,305.9 L138.0,307.7 L138.5,309.4 L139.0,310.5 L139.5,311.4 L140.0,311.8 L140.5,311.6 L141.0,311.1 L141.5,309.8 L142.0,308.1 L142.5,306.1 L143.0,303.7 L143.5,301.7 L144.0,299.9 L144.5,298.3 L145.0,296.8 L145.5,295.2 L146.0,294.3 L146.5,294.9 L147.0,296.2 L147.5,297.5 L148.0,298.8 L148.5,300.2 L149.0,301.8 L149.5,303.7 L150.0,305.4 L150.5,307.0 L151.0,308.1 L151.5,308.7 L152.0,309.1 L152.5,308.8 L153.0,308.3 L153.5,307.4 L154.0,306.2 L154.5,304.9 L155.0,303.2 L155.5,301.6 L156.0,300.2 L156.5,298.9 L157.0,297.8 L157.5,296.6 L158.0,295.5 L158.5,294.4 L159.0,293.7 L159.5,294.9 L160.0,296.1 L160.5,297.3 L161.0,298.5 L161.5,299.9 L162.0,301.4 L162.5,303.1 L163.0,304.8 L163.5,306.2 L164.0,307.1 L164.5,307.8 L165.0,308.1 L165.5,307.8 L166.0,307.2 L166.5,306.2 L167.0,304.9 L167.5,303.3 L168.0,301.6 L168.5,300.1 L169.0,298.7 L169.5,297.5 L170.0,296.3 L170.5,295.1 L171.0,294.1 L171.5,294.4 L172.0,295.8 L172.5,297.3 L173.0,298.7 L173.5,300.3 L174.0,302.1 L174.5,304.3 L175.0,306.2 L175.5,307.8 L176.0,309.0 L176.5,309.6 L177.0,309.7 L177.5,309.4 L178.0,308.7 L178.5,307.8 L179.0,306.6 L179.5,305.2 L180.0,303.6 L180.5,302.0 L181.0,300.6 L181.5,299.3 L182.0,298.2 L182.5,297.1 L183.0,295.9 L183.5,294.8 L184.0,293.9 L184.5,294.6 L185.0,295.9 L185.5,297.3 L186.0,298.6 L186.5,300.3 L187.0,302.1 L187.5,304.1 L188.0,305.7 L188.5,306.8 L189.0,307.4 L189.5,307.5 L190.0,307.2 L190.5,306.4 L191.0,305.5 L191.5,304.2 L192.0,302.8 L192.5,301.1 L193.0,299.8 L193.5,298.5 L194.0,297.4 L194.5,296.3 L195.0,295.2 L195.5,294.1 L196.0,293.5 L196.5,294.1 L197.0,294.8 L197.5,295.5 L198.0,296.2 L198.5,296.9 L199.0,297.8 L199.5,298.7 L200.0,299.7 L200.5,300.7 L201.0,301.6 L201.5,302.3 L202.0,302.8 L202.5,303.1 L203.0,303.3 L203.5,303.1 L204.0,302.7 L204.5,302.1 L205.0,301.2 L205.5,300.3 L206.0,299.1 L206.5,298.1 L207.0,297.1 L207.5,296.3 L208.0,295.6 L208.5,294.8 L209.0,294.0 L209.5,293.3 L210.0,294.3 L210.5,295.5 L211.0,296.6 L211.5,297.7 L212.0,298.9 L212.5,300.3 L213.0,301.9 L213.5,303.5 L214.0,304.9 L214.5,305.8 L215.0,306.5 L215.5,306.8 L216.0,306.7 L216.5,306.4 L217.0,305.6 L217.5,304.6 L218.0,303.4 L218.5,302.0 L219.0,300.6 L219.5,299.4 L220.0,298.2 L220.5,297.2 L221.0,296.2 L221.5,295.2 L222.0,294.3 L222.5,293.8 L223.0,295.4 L223.5,296.9 L224.0,298.5 L224.5,300.1 L225.0,302.1 L225.5,304.3 L226.0,306.5 L226.5,308.3 L227.0,309.6 L227.5,310.2 L228.0,310.4 L228.5,310.0 L229.0,309.0 L229.5,307.7 L230.0,306.1 L230.5,304.1 L231.0,302.2 L231.5,300.5 L232.0,299.0 L232.5,297.7 L233.0,296.3 L233.5,294.9 L234.0,294.1 L234.5,295.0 L235.0,296.4 L235.5,297.8 L236.0,299.3 L236.5,300.9 L237.0,302.8 L237.5,304.9 L238.0,306.7 L238.5,308.1 L239.0,309.2 L239.5,309.6 L240.0,309.6 L240.5,309.3 L241.0,308.5 L241.5,307.6 L242.0,306.2 L242.5,304.8 L243.0,303.1 L243.5,301.6 L244.0,300.2 L244.5,298.9 L245.0,297.8 L245.5,296.7 L246.0,295.5 L246.5,294.4 L247.0,293.8 L247.5,295.1 L248.0,296.4 L248.5,297.7 L249.0,299.0 L249.5,300.6 L250.0,302.3 L250.5,304.2 L251.0,305.8 L251.5,307.1 L252.0,308.0 L252.5,308.3 L253.0,308.1 L253.5,307.8 L254.0,306.9 L254.5,305.8 L255.0,304.5 L255.5,302.9 L256.0,301.3 L256.5,299.9 L257.0,298.6 L257.5,297.5 L258.0,296.4 L258.5,295.3 L259.0,294.2 L259.5,293.6 L260.0,294.6 L260.5,295.6 L261.0,296.7 L261.5,297.8 L262.0,299.0 L262.5,300.5 L263.0,302.0 L263.5,303.3 L264.0,304.2 L264.5,304.8 L265.0,305.1 L265.5,304.9 L266.0,304.6 L266.5,304.0 L267.0,303.4 L267.5,302.4 L268.0,301.4 L268.5,300.3 L269.0,299.2 L269.5,298.2 L270.0,297.3 L270.5,296.6 L271.0,295.8 L271.5,295.0 L272.0,294.2 L272.5,293.4 L273.0,293.7 L273.5,294.6 L274.0,295.4 L274.5,296.4 L275.0,297.4 L275.5,298.5 L276.0,299.9 L276.5,300.9 L277.0,301.8 L277.5,302.4 L278.0,302.6 L278.5,302.4 L279.0,302.2 L279.5,301.6 L280.0,301.0 L280.5,300.2 L281.0,299.2 L281.5,298.3 L282.0,297.4 L282.5,296.6 L283.0,295.9 L283.5,295.2 L284.0,294.6 L284.5,293.9 L285.0,293.2 L285.5,293.3 L286.0,294.0 L286.5,294.6 L287.0,295.2 L287.5,295.8 L288.0,296.6 L288.5,297.4 L289.0,298.3 L289.5,299.1 L290.0,299.7 L290.5,300.2 L291.0,300.4 L291.5,300.4 L292.0,300.3 L292.5,299.9 L293.0,299.3 L293.5,298.6 L294.0,297.8 L294.5,296.9 L295.0,296.2 L295.5,295.5 L296.0,294.9 L296.5,294.3 L297.0,293.7 L297.5,293.1 L298.0,293.2 L298.5,293.9 L299.0,294.5 L299.5,295.1 L300.0,295.8 L300.5,296.6 L301.0,297.6 L301.5,298.4 L302.0,299.1 L302.5,299.6 L303.0,299.7 L303.5,299.7 L304.0,299.6 L304.5,299.2 L305.0,298.9 L305.5,298.3 L306.0,297.7 L306.5,296.9 L307.0,296.3 L307.5,295.7 L308.0,295.1 L308.5,294.7 L309.0,294.2 L309.5,293.7 L310.0,293.2 L310.5,292.9 L311.0,293.4 L311.5,294.0 L312.0,294.5 L312.5,295.0 L313.0,295.6 L313.5,296.2 L314.0,297.0 L314.5,297.7 L315.0,298.3 L315.5,298.7 L316.0,299.0 L316.5,299.1 L317.0,298.9 L317.5,298.6 L318.0,298.2 L318.5,297.5 L319.0,296.7 L319.5,296.0 L320.0,295.3 L320.5,294.8 L321.0,294.2 L321.5,293.7 L322.0,293.1 L322.5,293.3 L323.0,294.1 L323.5,294.8 L324.0,295.6 L324.5,296.3 L325.0,297.2 L325.5,298.2 L326.0,299.3 L326.5,300.2 L327.0,301.0 L327.5,301.5 L328.0,301.8 L328.5,301.8 L329.0,301.6 L329.5,301.2 L330.0,300.7 L330.5,300.0 L331.0,299.2 L331.5,298.2 L332.0,297.3 L332.5,296.6 L333.0,295.9 L333.5,295.2 L334.0,294.6 L334.5,294.0 L335.0,293.3 L335.5,293.6 L336.0,294.5 L336.5,295.5 L337.0,296.4 L337.5,297.3 L338.0,298.4 L338.5,299.7 L339.0,301.1 L339.5,302.2 L340.0,303.1 L340.5,303.7 L341.0,304.0 L341.5,303.9 L342.0,303.6 L342.5,302.9 L343.0,302.0 L343.5,300.8 L344.0,299.5 L344.5,298.3 L345.0,297.2 L345.5,296.2 L346.0,295.3 L346.5,294.4 L347.0,293.6 L347.5,293.7 L348.0,294.5 L348.5,295.3 L349.0,296.2 L349.5,297.0 L350.0,298.0 L350.5,299.1 L351.0,300.3 L351.5,301.4 L352.0,302.5 L352.5,303.2 L353.0,303.8 L353.5,304.0 L354.0,304.0 L354.5,303.7 L355.0,303.0 L355.5,302.2 L356.0,301.2 L356.5,299.9 L357.0,298.7 L357.5,297.7 L358.0,296.7 L358.5,295.9 L359.0,295.0 L359.5,294.1 L360.0,293.4 L360.5,293.7 L361.0,294.4 L361.5,295.2 L362.0,295.9 L362.5,296.6 L363.0,297.4 L363.5,298.3 L364.0,299.4 L364.5,300.4 L365.0,301.3 L365.5,302.1 L366.0,302.7 L366.5,303.1 L367.0,303.3 L367.5,303.1 L368.0,302.8 L368.5,302.1 L369.0,301.2 L369.5,300.1 L370.0,298.9 L370.5,297.8 L371.0,296.8 L371.5,295.9 L372.0,295.1 L372.5,294.2 L373.0,293.5 L373.5,293.5 L374.0,294.2 L374.5,294.9 L375.0,295.6 L375.5,296.3 L376.0,297.1 L376.5,297.9 L377.0,298.9 L377.5,300.0 L378.0,300.8 L378.5,301.5 L379.0,302.1 L379.5,302.4 L380.0,302.6 L380.5,302.4 L381.0,301.9 L381.5,301.2 L382.0,300.1 L382.5,299.0 L383.0,297.8 L383.5,296.8 L384.0,295.9 L384.5,295.1 L385.0,294.2 L385.5,293.5 L386.0,293.6 L386.5,294.6 L387.0,295.5 L387.5,296.5 L388.0,297.6 L388.5,298.9 L389.0,300.3 L389.5,301.4 L390.0,302.1 L390.5,302.5 L391.0,302.5 L391.5,302.3 L392.0,302.0 L392.5,301.5 L393.0,300.9 L393.5,300.1 L394.0,299.3 L394.5,298.4 L395.0,297.6 L395.5,296.9 L396.0,296.2 L396.5,295.6 L397.0,295.0 L397.5,294.4 L398.0,293.8 L398.5,293.2 L399.0,293.8 L399.5,294.7 L400.0,295.6 L400.5,296.5 L401.0,297.4 L401.5,298.4 L402.0,299.6 L402.5,300.9 L403.0,302.1 L403.5,303.1 L404.0,303.9 L404.5,304.5 L405.0,304.7 L405.5,304.6 L406.0,304.0 L406.5,302.8 L407.0,301.3 L407.5,299.4 L408.0,297.9 L408.5,296.7 L409.0,295.4 L409.5,294.4 L410.0,294.1 L410.5,295.6 L411.0,297.1 L411.5,298.6 L412.0,300.1 L412.5,301.9 L413.0,303.9 L413.5,306.1 L414.0,308.0 L414.5,309.7 L415.0,310.9 L415.5,311.6 L416.0,311.8 L416.5,311.5 L417.0,310.7 L417.5,309.7 L418.0,308.2 L418.5,306.5 L419.0,304.5 L419.5,302.7 L420.0,301.1 L420.5,299.6 L421.0,298.3 L421.5,296.9 L422.0,295.6 L422.5,294.4 L423.0,294.8 L423.5,296.5 L424.0,298.2 L424.5,299.9 L425.0,301.8 L425.5,303.9 L426.0,306.4 L426.5,308.8 L427.0,310.8 L427.5,312.2 L428.0,313.0 L428.5,313.3 L429.0,312.9 L429.5,312.1 L430.0,311.0 L430.5,309.4 L431.0,307.6 L431.5,305.4 L432.0,303.5 L432.5,301.7 L433.0,300.2 L433.5,298.7 L434.0,297.3 L434.5,295.8 L435.0,294.5 L435.5,294.9 L436.0,296.8 L436.5,298.6 L437.0,300.5 L437.5,302.5 L438.0,304.8 L438.5,307.5 L439.0,309.9 L439.5,311.9 L440.0,313.4 L440.5,313.9 L441.0,313.9 L441.5,313.5 L442.0,312.4 L442.5,311.2 L443.0,309.4 L443.5,307.5 L444.0,305.4 L444.5,303.4 L445.0,301.7 L445.5,300.2 L446.0,298.7 L446.5,297.3 L447.0,295.8 L447.5,294.5 L448.0,294.8 L448.5,296.4 L449.0,298.1 L449.5,299.7 L450.0,301.5 L450.5,303.6 L451.0,306.0 L451.5,308.2 L452.0,309.9 L452.5,311.2 L453.0,311.7 L453.5,311.7 L454.0,311.4 L454.5,310.5 L455.0,309.5 L455.5,308.1 L456.0,306.6 L456.5,304.7 L457.0,303.0 L457.5,301.4 L458.0,300.0 L458.5,298.8 L459.0,297.6 L459.5,296.3 L460.0,295.1 L460.5,294.0 L461.0,294.6 L461.5,295.7 L462.0,296.9 L462.5,298.1 L463.0,299.3 L463.5,300.8 L464.0,302.3 L464.5,304.1 L465.0,305.6 L465.5,307.1 L466.0,308.0 L466.5,308.7 L467.0,309.0 L467.5,308.8 L468.0,308.3 L468.5,307.3 L469.0,305.9 L469.5,304.4 L470.0,302.5 L470.5,300.9 L471.0,299.3 L471.5,298.1 L472.0,296.8 L472.5,295.6 L473.0,294.3 L473.5,294.1 L474.0,295.6 L474.5,297.0 L475.0,298.5 L475.5,299.9 L476.0,301.6 L476.5,303.5 L477.0,305.7 L477.5,307.5 L478.0,309.1 L478.5,310.3 L479.0,310.9 L479.5,311.1 L480.0,310.8 L480.5,309.9 L481.0,308.9 L481.5,307.2 L482.0,305.4 L482.5,303.4 L483.0,301.7 L483.5,300.1 L484.0,298.7 L484.5,297.4 L485.0,296.0 L485.5,294.6 L486.0,294.5 L486.5,296.2 L487.0,298.0 L487.5,299.7 L488.0,301.4 L488.5,303.4 L489.0,305.5 L489.5,308.0 L490.0,310.4 L490.5,312.5 L491.0,314.2 L491.5,315.5 L492.0,316.0 L492.5,316.1 L493.0,315.4 L493.5,313.7 L494.0,311.4 L494.5,308.6 L495.0,305.5 L495.5,302.9 L496.0,300.7 L496.5,298.6 L497.0,296.5 L497.5,295.2 L498.0,295.5 L498.5,297.5 L499.0,299.4 L499.5,301.4 L500.0,303.7 L500.5,306.2 L501.0,309.1 L501.5,311.5 L502.0,313.5 L502.5,314.9 L503.0,315.4 L503.5,315.2 L504.0,314.8 L504.5,313.9 L505.0,312.8 L505.5,311.2 L506.0,309.5 L506.5,307.6 L507.0,305.5 L507.5,303.8 L508.0,302.1 L508.5,300.8 L509.0,299.4 L509.5,298.0 L510.0,296.6 L510.5,295.3 L511.0,294.3 L511.5,295.8 L512.0,297.6 L512.5,299.5 L513.0,301.4 L513.5,303.6 L514.0,306.1 L514.5,308.8 L515.0,311.1 L515.5,312.9 L516.0,314.2 L516.5,314.7 L517.0,314.4 L517.5,313.7 L518.0,312.4 L518.5,310.6 L519.0,308.4 L519.5,305.9 L520.0,303.7 L520.5,301.6 L521.0,299.9 L521.5,298.2 L522.0,296.6 L522.5,294.9 L523.0,294.4 L523.5,295.9 L524.0,297.3 L524.5,298.7 L525.0,300.2 L525.5,301.7 L526.0,303.5 L526.5,305.5 L527.0,307.6 L527.5,309.4 L528.0,311.0 L528.5,312.1 L529.0,312.9 L529.5,313.3 L530.0,313.0 L530.5,312.4 L531.0,311.1 L531.5,309.3 L532.0,307.2 L532.5,304.9 L533.0,302.8 L533.5,300.8 L534.0,299.2 L534.5,297.6 L535.0,296.0 L535.5,294.7 L536.0,294.7 L536.5,296.3 L537.0,297.9 L537.5,299.5 L538.0,301.2 L538.5,303.1 L539.0,305.5 L539.5,307.6 L540.0,309.5 L540.5,310.8 L541.0,311.6 L541.5,311.8 L542.0,311.5 L542.5,310.9 L543.0,309.8 L543.5,308.5 L544.0,306.9 L544.5,305.1 L545.0,303.2 L545.5,301.7 L546.0,300.2 L546.5,298.9 L547.0,297.6 L547.5,296.4 L548.0,295.1 L548.5,294.0 L549.0,294.4 L549.5,295.5 L550.0,296.5 L550.5,297.6 L551.0,298.7 L551.5,299.9 L552.0,301.3 L552.5,302.9 L553.0,304.3 L553.5,305.6 L554.0,306.5 L554.5,307.2 L555.0,307.5 L555.5,307.4 L556.0,306.9 L556.5,305.9 L557.0,304.6 L557.5,303.0 L558.0,301.1 L558.5,299.6 L559.0,298.2 L559.5,296.9 L560.0,295.7 L560.5,294.5 L561.0,293.9 L561.5,295.0 L562.0,296.2 L562.5,297.4 L563.0,298.7 L563.5,300.0 L564.0,301.5 L564.5,303.2 L565.0,305.0 L565.5,306.6 L566.0,308.0 L566.5,309.0 L567.0,309.7 L567.5,310.0 L568.0,309.8 L568.5,309.3 L569.0,308.2 L569.5,306.8 L570.0,305.1 L570.5,303.2 L571.0,301.4 L571.5,299.8 L572.0,298.5 L572.5,297.2 L573.0,295.9 L573.5,294.6 L574.0,294.4 L574.5,296.0 L575.0,297.6 L575.5,299.2 L576.0,300.8 L576.5,302.5 L577.0,304.5 L577.5,306.7 L578.0,309.0 L578.5,311.0 L579.0,312.8 L579.5,314.1 L580.0,315.0 L580.5,315.4 L581.0,315.1 L581.5,314.0 L582.0,312.2 L582.5,309.8 L583.0,306.8 L583.5,304.1 L584.0,301.7 L584.5,299.6 L585.0,297.6 L585.5,295.6 L586.0,294.8 L586.5,296.2 L587.0,298.0 L587.5,299.9 L588.0,301.8 L588.5,304.0 L589.0,306.4 L589.5,309.2 L590.0,311.5 L590.5,313.4 L591.0,314.8 L591.5,315.3 L592.0,315.2 L592.5,314.8 L593.0,313.7 L593.5,312.3 L594.0,310.4 L594.5,308.3 L595.0,306.0 L595.5,304.0 L596.0,302.1 L596.5,300.5 L597.0,298.9 L597.5,297.4 L598.0,295.8 L598.5,294.6 L599.0,295.5 L599.5,297.4 L600.0,299.3 L600.5,301.3 L601.0,303.4 L601.5,305.9 L602.0,308.8 L602.5,311.2 L603.0,313.2 L603.5,314.8 L604.0,315.3 L604.5,315.2 L605.0,314.8 L605.5,313.6 L606.0,312.2 L606.5,310.3 L607.0,308.1 L607.5,305.8 L608.0,303.8 L608.5,301.9 L609.0,300.3 L609.5,298.7 L610.0,297.1 L610.5,295.5 L611.0,294.5 L611.5,295.5 L612.0,297.1 L612.5,298.7 L613.0,300.2 L613.5,301.9 L614.0,303.8 L614.5,305.9 L615.0,308.2 L615.5,310.3 L616.0,312.1 L616.5,313.4 L617.0,314.3 L617.5,314.7 L618.0,314.4 L618.5,313.8 L619.0,312.4 L619.5,310.6 L620.0,308.6 L620.5,306.1 L621.0,303.8 L621.5,301.8 L622.0,300.1 L622.5,298.4 L623.0,296.7 L623.5,295.1 L624.0,294.3 L624.5,295.5 L625.0,296.9 L625.5,298.4 L626.0,299.9 L626.5,301.7 L627.0,303.7 L627.5,305.8 L628.0,307.6 L628.5,308.8 L629.0,309.5 L629.5,309.7 L630.0,309.4 L630.5,308.9 L631.0,308.1 L631.5,307.0 L632.0,305.7 L632.5,304.2 L633.0,302.6 L633.5,301.1 L634.0,299.8 L634.5,298.7 L635.0,297.6 L635.5,296.5 L636.0,295.4 L636.5,294.3 L637.0,293.7 L637.5,294.8 L638.0,295.9 L638.5,297.0 L639.0,298.1 L639.5,299.3 L640.0,300.7 L640.5,302.4 L641.0,303.8 L641.5,305.1 L642.0,306.0 L642.5,306.6 L643.0,306.9 L643.5,306.6 L644.0,306.1 L644.5,305.2 L645.0,304.0 L645.5,302.6 L646.0,301.1 L646.5,299.7 L647.0,298.4 L647.5,297.3 L648.0,296.3 L648.5,295.2 L649.0,294.2 L649.5,294.1 L650.0,295.5 L650.5,296.9 L651.0,298.2 L651.5,299.6 L652.0,301.2 L652.5,302.9 L653.0,304.9 L653.5,306.9 L654.0,308.6 L654.5,310.0 L655.0,311.1 L655.5,311.6 L656.0,311.8 L656.5,311.4 L657.0,310.6 L657.5,309.4 L658.0,307.6 L658.5,305.7 L659.0,303.5 L659.5,301.7 L660.0,300.1 L660.5,298.6 L661.0,297.2 L661.5,295.7 L662.0,294.5 L662.5,295.1 L663.0,297.3 L663.5,299.6 L664.0,302.4 L664.5,305.6 L665.0,307.8 L665.5,308.9 L666.0,309.0 L666.0,288.0 Z" fill="#33cc33"/>
<path d="M67.5,288.0 L67.5,293.8 L68.0,293.8 L68.5,293.7 L69.0,293.5 L69.5,293.4 L70.0,293.2 L70.5,293.0 L71.0,292.8 L71.5,292.6 L72.0,292.4 L72.5,292.3 L73.0,292.8 L73.5,293.3 L74.0,293.8 L74.5,294.2 L75.0,294.8 L75.5,295.5 L76.0,296.2 L76.5,296.7 L77.0,297.1 L77.5,297.3 L78.0,297.3 L78.5,297.1 L79.0,296.9 L79.5,296.7 L80.0,296.5 L80.5,296.3 L81.0,295.9 L81.5,295.4 L82.0,294.9 L82.5,294.5 L83.0,294.0 L83.5,293.5 L84.0,293.1 L84.5,292.6 L85.0,292.3 L85.5,292.8 L86.0,293.3 L86.5,293.8 L87.0,294.3 L87.5,294.9 L88.0,295.6 L88.5,296.2 L89.0,296.7 L89.5,297.1 L90.0,297.2 L90.5,297.1 L91.0,296.9 L91.5,296.7 L92.0,296.5 L92.5,296.3 L93.0,296.1 L93.5,295.8 L94.0,295.4 L94.5,294.9 L95.0,294.5 L95.5,294.1 L96.0,293.7 L96.5,293.2 L97.0,292.8 L97.5,292.4 L98.0,292.3 L98.5,292.7 L99.0,293.2 L99.5,293.6 L100.0,294.1 L100.5,294.6 L101.0,295.3 L101.5,295.8 L102.0,296.3 L102.5,296.5 L103.0,296.7 L103.5,296.5 L104.0,296.3 L104.5,296.1 L105.0,295.9 L105.5,295.7 L106.0,295.2 L106.5,294.8 L107.0,294.3 L107.5,293.9 L108.0,293.4 L108.5,292.9 L109.0,292.5 L109.5,292.0 L110.0,292.1 L110.5,292.4 L111.0,292.7 L111.5,292.9 L112.0,293.2 L112.5,293.5 L113.0,293.8 L113.5,294.2 L114.0,294.6 L114.5,295.0 L115.0,295.3 L115.5,295.5 L116.0,295.8 L116.5,295.9 L117.0,295.9 L117.5,295.7 L118.0,295.5 L118.5,295.3 L119.0,295.1 L119.5,294.7 L120.0,294.3 L120.5,293.8 L121.0,293.3 L121.5,292.9 L122.0,292.4 L122.5,291.9 L123.0,292.2 L123.5,292.6 L124.0,292.9 L124.5,293.3 L125.0,293.6 L125.5,294.0 L126.0,294.5 L126.5,295.0 L127.0,295.4 L127.5,295.9 L128.0,296.2 L128.5,296.4 L129.0,296.5 L129.5,296.5 L130.0,296.3 L130.5,296.0 L131.0,295.8 L131.5,295.5 L132.0,295.1 L132.5,294.6 L133.0,294.0 L133.5,293.5 L134.0,293.0 L134.5,292.5 L135.0,292.3 L135.5,292.7 L136.0,293.1 L136.5,293.5 L137.0,293.9 L137.5,294.3 L138.0,294.7 L138.5,295.3 L139.0,295.9 L139.5,296.3 L140.0,296.8 L140.5,297.1 L141.0,297.4 L141.5,297.5 L142.0,297.4 L142.5,297.1 L143.0,296.8 L143.5,296.6 L144.0,296.2 L144.5,295.6 L145.0,295.0 L145.5,294.4 L146.0,293.8 L146.5,293.2 L147.0,292.6 L147.5,292.4 L148.0,292.7 L148.5,293.1 L149.0,293.5 L149.5,293.9 L150.0,294.3 L150.5,294.8 L151.0,295.4 L151.5,295.9 L152.0,296.3 L152.5,296.6 L153.0,296.8 L153.5,296.9 L154.0,296.7 L154.5,296.5 L155.0,296.3 L155.5,296.1 L156.0,295.9 L156.5,295.5 L157.0,295.1 L157.5,294.6 L158.0,294.1 L158.5,293.7 L159.0,293.2 L159.5,292.7 L160.0,292.2 L160.5,292.3 L161.0,292.6 L161.5,293.0 L162.0,293.4 L162.5,293.8 L163.0,294.2 L163.5,294.7 L164.0,295.2 L164.5,295.7 L165.0,296.1 L165.5,296.4 L166.0,296.6 L166.5,296.7 L167.0,296.5 L167.5,296.3 L168.0,296.1 L168.5,295.8 L169.0,295.5 L169.5,295.1 L170.0,294.6 L170.5,294.1 L171.0,293.6 L171.5,293.1 L172.0,292.6 L172.5,292.1 L173.0,292.5 L173.5,292.9 L174.0,293.4 L174.5,293.8 L175.0,294.3 L175.5,294.8 L176.0,295.5 L176.5,296.0 L177.0,296.5 L177.5,296.8 L178.0,297.0 L178.5,297.0 L179.0,296.8 L179.5,296.6 L180.0,296.4 L180.5,296.2 L181.0,296.0 L181.5,295.6 L182.0,295.2 L182.5,294.7 L183.0,294.3 L183.5,293.8 L184.0,293.4 L184.5,292.9 L185.0,292.4 L185.5,292.2 L186.0,292.6 L186.5,293.0 L187.0,293.4 L187.5,293.8 L188.0,294.4 L188.5,294.9 L189.0,295.5 L189.5,296.0 L190.0,296.3 L190.5,296.5 L191.0,296.5 L191.5,296.3 L192.0,296.1 L192.5,295.9 L193.0,295.7 L193.5,295.3 L194.0,294.9 L194.5,294.4 L195.0,294.0 L195.5,293.5 L196.0,293.0 L196.5,292.5 L197.0,292.0 L197.5,292.0 L198.0,292.3 L198.5,292.5 L199.0,292.8 L199.5,293.0 L200.0,293.3 L200.5,293.6 L201.0,294.0 L201.5,294.3 L202.0,294.7 L202.5,295.0 L203.0,295.2 L203.5,295.5 L204.0,295.6 L204.5,295.6 L205.0,295.5 L205.5,295.3 L206.0,295.1 L206.5,295.0 L207.0,294.7 L207.5,294.4 L208.0,294.0 L208.5,293.6 L209.0,293.2 L209.5,292.8 L210.0,292.4 L210.5,292.1 L211.0,292.0 L211.5,292.3 L212.0,292.7 L212.5,293.1 L213.0,293.4 L213.5,293.9 L214.0,294.3 L214.5,294.8 L215.0,295.3 L215.5,295.8 L216.0,296.1 L216.5,296.3 L217.0,296.4 L217.5,296.3 L218.0,296.1 L218.5,295.9 L219.0,295.7 L219.5,295.6 L220.0,295.2 L220.5,294.8 L221.0,294.4 L221.5,293.9 L222.0,293.5 L222.5,293.1 L223.0,292.7 L223.5,292.2 L224.0,292.4 L224.5,292.8 L225.0,293.3 L225.5,293.7 L226.0,294.2 L226.5,294.8 L227.0,295.5 L227.5,296.1 L228.0,296.6 L228.5,297.0 L229.0,297.1 L229.5,297.1 L230.0,296.9 L230.5,296.6 L231.0,296.4 L231.5,296.2 L232.0,295.7 L232.5,295.2 L233.0,294.7 L233.5,294.1 L234.0,293.6 L234.5,293.1 L235.0,292.5 L235.5,292.3 L236.0,292.8 L236.5,293.2 L237.0,293.6 L237.5,294.0 L238.0,294.5 L238.5,295.1 L239.0,295.7 L239.5,296.2 L240.0,296.6 L240.5,296.9 L241.0,297.0 L241.5,296.9 L242.0,296.7 L242.5,296.6 L243.0,296.4 L243.5,296.2 L244.0,295.9 L244.5,295.5 L245.0,295.0 L245.5,294.6 L246.0,294.1 L246.5,293.7 L247.0,293.2 L247.5,292.7 L248.0,292.3 L248.5,292.3 L249.0,292.7 L249.5,293.1 L250.0,293.5 L250.5,293.9 L251.0,294.4 L251.5,295.0 L252.0,295.5 L252.5,296.0 L253.0,296.4 L253.5,296.6 L254.0,296.7 L254.5,296.6 L255.0,296.4 L255.5,296.2 L256.0,296.0 L256.5,295.8 L257.0,295.4 L257.5,295.0 L258.0,294.5 L258.5,294.0 L259.0,293.6 L259.5,293.1 L260.0,292.6 L260.5,292.1 L261.0,292.1 L261.5,292.5 L262.0,292.9 L262.5,293.2 L263.0,293.6 L263.5,294.0 L264.0,294.5 L264.5,295.0 L265.0,295.4 L265.5,295.7 L266.0,295.9 L266.5,296.0 L267.0,295.9 L267.5,295.7 L268.0,295.6 L268.5,295.4 L269.0,295.2 L269.5,295.0 L270.0,294.7 L270.5,294.3 L271.0,294.0 L271.5,293.6 L272.0,293.2 L272.5,292.9 L273.0,292.5 L273.5,292.1 L274.0,291.7 L274.5,292.1 L275.0,292.4 L275.5,292.8 L276.0,293.1 L276.5,293.5 L277.0,294.0 L277.5,294.4 L278.0,294.9 L278.5,295.2 L279.0,295.4 L279.5,295.5 L280.0,295.3 L280.5,295.2 L281.0,295.0 L281.5,294.9 L282.0,294.7 L282.5,294.4 L283.0,294.1 L283.5,293.7 L284.0,293.4 L284.5,293.0 L285.0,292.7 L285.5,292.3 L286.0,291.9 L286.5,291.6 L287.0,291.8 L287.5,292.1 L288.0,292.4 L288.5,292.7 L289.0,292.9 L289.5,293.3 L290.0,293.7 L290.5,294.1 L291.0,294.4 L291.5,294.7 L292.0,294.9 L292.5,295.0 L293.0,294.9 L293.5,294.8 L294.0,294.6 L294.5,294.5 L295.0,294.3 L295.5,294.0 L296.0,293.7 L296.5,293.3 L297.0,293.0 L297.5,292.6 L298.0,292.2 L298.5,291.8 L299.0,291.5 L299.5,291.8 L300.0,292.1 L300.5,292.4 L301.0,292.7 L301.5,293.0 L302.0,293.4 L302.5,293.8 L303.0,294.2 L303.5,294.5 L304.0,294.7 L304.5,294.8 L305.0,294.8 L305.5,294.6 L306.0,294.5 L306.5,294.4 L307.0,294.2 L307.5,294.1 L308.0,293.8 L308.5,293.5 L309.0,293.1 L309.5,292.8 L310.0,292.5 L310.5,292.2 L311.0,291.9 L311.5,291.6 L312.0,291.6 L312.5,291.8 L313.0,292.1 L313.5,292.4 L314.0,292.6 L314.5,292.9 L315.0,293.3 L315.5,293.7 L316.0,294.0 L316.5,294.3 L317.0,294.5 L317.5,294.6 L318.0,294.7 L318.5,294.5 L319.0,294.4 L319.5,294.2 L320.0,294.1 L320.5,293.8 L321.0,293.4 L321.5,293.0 L322.0,292.6 L322.5,292.2 L323.0,291.9 L323.5,291.5 L324.0,291.8 L324.5,292.1 L325.0,292.4 L325.5,292.7 L326.0,293.0 L326.5,293.4 L327.0,293.8 L327.5,294.3 L328.0,294.6 L328.5,294.9 L329.0,295.2 L329.5,295.3 L330.0,295.3 L330.5,295.1 L331.0,295.0 L331.5,294.8 L332.0,294.7 L332.5,294.4 L333.0,294.1 L333.5,293.8 L334.0,293.4 L334.5,293.1 L335.0,292.7 L335.5,292.4 L336.0,292.0 L336.5,291.7 L337.0,292.0 L337.5,292.3 L338.0,292.7 L338.5,293.0 L339.0,293.4 L339.5,293.8 L340.0,294.2 L340.5,294.7 L341.0,295.1 L341.5,295.4 L342.0,295.7 L342.5,295.8 L343.0,295.7 L343.5,295.5 L344.0,295.3 L344.5,295.1 L345.0,294.9 L345.5,294.5 L346.0,294.0 L346.5,293.6 L347.0,293.1 L347.5,292.7 L348.0,292.2 L348.5,291.8 L349.0,292.1 L349.5,292.4 L350.0,292.7 L350.5,293.0 L351.0,293.3 L351.5,293.6 L352.0,294.0 L352.5,294.5 L353.0,294.9 L353.5,295.2 L354.0,295.5 L354.5,295.7 L355.0,295.8 L355.5,295.7 L356.0,295.5 L356.5,295.3 L357.0,295.1 L357.5,295.0 L358.0,294.6 L358.5,294.2 L359.0,293.8 L359.5,293.4 L360.0,292.9 L360.5,292.5 L361.0,292.1 L361.5,291.8 L362.0,292.1 L362.5,292.3 L363.0,292.6 L363.5,292.9 L364.0,293.1 L364.5,293.4 L365.0,293.8 L365.5,294.2 L366.0,294.6 L366.5,294.9 L367.0,295.2 L367.5,295.4 L368.0,295.5 L368.5,295.6 L369.0,295.5 L369.5,295.3 L370.0,295.1 L370.5,294.9 L371.0,294.7 L371.5,294.3 L372.0,293.9 L372.5,293.4 L373.0,293.0 L373.5,292.5 L374.0,292.1 L374.5,291.7 L375.0,291.9 L375.5,292.2 L376.0,292.5 L376.5,292.8 L377.0,293.0 L377.5,293.3 L378.0,293.7 L378.5,294.1 L379.0,294.5 L379.5,294.8 L380.0,295.1 L380.5,295.3 L381.0,295.4 L381.5,295.5 L382.0,295.3 L382.5,295.1 L383.0,294.9 L383.5,294.7 L384.0,294.3 L384.5,293.9 L385.0,293.4 L385.5,293.0 L386.0,292.6 L386.5,292.1 L387.0,291.6 L387.5,292.0 L388.0,292.4 L388.5,292.8 L389.0,293.1 L389.5,293.6 L390.0,294.1 L390.5,294.6 L391.0,295.0 L391.5,295.3 L392.0,295.4 L392.5,295.4 L393.0,295.3 L393.5,295.1 L394.0,295.0 L394.5,294.9 L395.0,294.7 L395.5,294.5 L396.0,294.2 L396.5,293.9 L397.0,293.6 L397.5,293.2 L398.0,292.9 L398.5,292.6 L399.0,292.3 L399.5,292.0 L400.0,291.8 L400.5,292.1 L401.0,292.4 L401.5,292.7 L402.0,293.0 L402.5,293.4 L403.0,293.7 L403.5,294.1 L404.0,294.6 L404.5,295.0 L405.0,295.4 L405.5,295.6 L406.0,295.8 L406.5,295.9 L407.0,295.8 L407.5,295.6 L408.0,295.3 L408.5,295.0 L409.0,294.5 L409.5,293.9 L410.0,293.3 L410.5,292.7 L411.0,292.2 L411.5,292.4 L412.0,292.8 L412.5,293.3 L413.0,293.7 L413.5,294.1 L414.0,294.7 L414.5,295.3 L415.0,295.9 L415.5,296.4 L416.0,296.9 L416.5,297.2 L417.0,297.4 L417.5,297.5 L418.0,297.3 L418.5,297.0 L419.0,296.8 L419.5,296.6 L420.0,296.3 L420.5,295.9 L421.0,295.4 L421.5,294.9 L422.0,294.4 L422.5,293.9 L423.0,293.4 L423.5,292.9 L424.0,292.4 L424.5,292.8 L425.0,293.3 L425.5,293.8 L426.0,294.2 L426.5,294.7 L427.0,295.3 L427.5,296.0 L428.0,296.6 L428.5,297.2 L429.0,297.5 L429.5,297.7 L430.0,297.8 L430.5,297.6 L431.0,297.4 L431.5,297.1 L432.0,296.9 L432.5,296.6 L433.0,296.1 L433.5,295.6 L434.0,295.1 L434.5,294.6 L435.0,294.0 L435.5,293.5 L436.0,293.0 L436.5,292.4 L437.0,292.9 L437.5,293.4 L438.0,293.9 L438.5,294.4 L439.0,294.9 L439.5,295.6 L440.0,296.3 L440.5,296.9 L441.0,297.4 L441.5,297.8 L442.0,297.9 L442.5,297.9 L443.0,297.6 L443.5,297.4 L444.0,297.2 L444.5,296.9 L445.0,296.6 L445.5,296.1 L446.0,295.6 L446.5,295.1 L447.0,294.5 L447.5,294.0 L448.0,293.4 L448.5,292.9 L449.0,292.4 L449.5,292.8 L450.0,293.3 L450.5,293.7 L451.0,294.2 L451.5,294.7 L452.0,295.3 L452.5,296.0 L453.0,296.5 L453.5,297.0 L454.0,297.3 L454.5,297.5 L455.0,297.4 L455.5,297.2 L456.0,297.0 L456.5,296.8 L457.0,296.6 L457.5,296.3 L458.0,295.9 L458.5,295.5 L459.0,295.0 L459.5,294.5 L460.0,294.0 L460.5,293.5 L461.0,293.1 L461.5,292.6 L462.0,292.3 L462.5,292.6 L463.0,293.0 L463.5,293.3 L464.0,293.7 L464.5,294.0 L465.0,294.5 L465.5,294.9 L466.0,295.5 L466.5,295.9 L467.0,296.3 L467.5,296.6 L468.0,296.8 L468.5,296.9 L469.0,296.7 L469.5,296.5 L470.0,296.3 L470.5,296.1 L471.0,295.8 L471.5,295.3 L472.0,294.8 L472.5,294.3 L473.0,293.8 L473.5,293.3 L474.0,292.8 L474.5,292.3 L475.0,292.5 L475.5,292.9 L476.0,293.3 L476.5,293.7 L477.0,294.2 L477.5,294.7 L478.0,295.2 L478.5,295.8 L479.0,296.3 L479.5,296.8 L480.0,297.1 L480.5,297.3 L481.0,297.3 L481.5,297.1 L482.0,296.9 L482.5,296.7 L483.0,296.4 L483.5,296.1 L484.0,295.6 L484.5,295.1 L485.0,294.6 L485.5,294.1 L486.0,293.6 L486.5,293.1 L487.0,292.5 L487.5,292.8 L488.0,293.2 L488.5,293.7 L489.0,294.1 L489.5,294.6 L490.0,295.1 L490.5,295.7 L491.0,296.4 L491.5,297.0 L492.0,297.5 L492.5,297.9 L493.0,298.3 L493.5,298.4 L494.0,298.4 L494.5,298.0 L495.0,297.7 L495.5,297.4 L496.0,296.9 L496.5,296.2 L497.0,295.4 L497.5,294.7 L498.0,293.9 L498.5,293.2 L499.0,292.7 L499.5,293.2 L500.0,293.7 L500.5,294.2 L501.0,294.7 L501.5,295.3 L502.0,296.0 L502.5,296.7 L503.0,297.3 L503.5,297.8 L504.0,298.1 L504.5,298.3 L505.0,298.1 L505.5,297.9 L506.0,297.7 L506.5,297.5 L507.0,297.3 L507.5,297.1 L508.0,296.7 L508.5,296.2 L509.0,295.8 L509.5,295.3 L510.0,294.8 L510.5,294.3 L511.0,293.8 L511.5,293.3 L512.0,292.8 L512.5,292.7 L513.0,293.2 L513.5,293.7 L514.0,294.2 L514.5,294.7 L515.0,295.3 L515.5,295.9 L516.0,296.6 L516.5,297.2 L517.0,297.7 L517.5,298.0 L518.0,298.1 L518.5,297.9 L519.0,297.7 L519.5,297.4 L520.0,297.2 L520.5,296.8 L521.0,296.3 L521.5,295.7 L522.0,295.1 L522.5,294.4 L523.0,293.8 L523.5,293.2 L524.0,292.6 L524.5,292.8 L525.0,293.1 L525.5,293.5 L526.0,293.9 L526.5,294.3 L527.0,294.7 L527.5,295.2 L528.0,295.8 L528.5,296.3 L529.0,296.8 L529.5,297.2 L530.0,297.5 L530.5,297.7 L531.0,297.8 L531.5,297.6 L532.0,297.4 L532.5,297.1 L533.0,296.9 L533.5,296.5 L534.0,296.0 L534.5,295.4 L535.0,294.8 L535.5,294.2 L536.0,293.6 L536.5,292.9 L537.0,292.4 L537.5,292.8 L538.0,293.2 L538.5,293.7 L539.0,294.1 L539.5,294.6 L540.0,295.1 L540.5,295.8 L541.0,296.4 L541.5,296.9 L542.0,297.2 L542.5,297.4 L543.0,297.5 L543.5,297.3 L544.0,297.1 L544.5,296.8 L545.0,296.6 L545.5,296.4 L546.0,296.0 L546.5,295.5 L547.0,295.0 L547.5,294.5 L548.0,294.0 L548.5,293.5 L549.0,293.0 L549.5,292.5 L550.0,292.2 L550.5,292.5 L551.0,292.9 L551.5,293.2 L552.0,293.5 L552.5,293.8 L553.0,294.2 L553.5,294.7 L554.0,295.2 L554.5,295.6 L555.0,296.0 L555.5,296.2 L556.0,296.4 L556.5,296.5 L557.0,296.4 L557.5,296.2 L558.0,296.0 L558.5,295.8 L559.0,295.4 L559.5,294.9 L560.0,294.4 L560.5,293.9 L561.0,293.4 L561.5,292.8 L562.0,292.3 L562.5,292.3 L563.0,292.7 L563.5,293.0 L564.0,293.4 L564.5,293.8 L565.0,294.2 L565.5,294.6 L566.0,295.1 L566.5,295.7 L567.0,296.1 L567.5,296.5 L568.0,296.8 L568.5,297.0 L569.0,297.1 L569.5,296.9 L570.0,296.7 L570.5,296.5 L571.0,296.3 L571.5,296.0 L572.0,295.5 L572.5,295.0 L573.0,294.5 L573.5,294.0 L574.0,293.5 L574.5,293.0 L575.0,292.5 L575.5,292.7 L576.0,293.1 L576.5,293.6 L577.0,294.0 L577.5,294.4 L578.0,294.9 L578.5,295.4 L579.0,296.0 L579.5,296.6 L580.0,297.1 L580.5,297.6 L581.0,297.9 L581.5,298.2 L582.0,298.3 L582.5,298.1 L583.0,297.8 L583.5,297.4 L584.0,297.1 L584.5,296.5 L585.0,295.8 L585.5,295.0 L586.0,294.3 L586.5,293.6 L587.0,292.8 L587.5,292.8 L588.0,293.3 L588.5,293.8 L589.0,294.3 L589.5,294.8 L590.0,295.4 L590.5,296.0 L591.0,296.7 L591.5,297.3 L592.0,297.8 L592.5,298.1 L593.0,298.2 L593.5,298.2 L594.0,297.9 L594.5,297.7 L595.0,297.5 L595.5,297.2 L596.0,296.8 L596.5,296.3 L597.0,295.8 L597.5,295.2 L598.0,294.7 L598.5,294.1 L599.0,293.6 L599.5,293.0 L600.0,292.6 L600.5,293.1 L601.0,293.6 L601.5,294.1 L602.0,294.6 L602.5,295.2 L603.0,295.9 L603.5,296.6 L604.0,297.2 L604.5,297.7 L605.0,298.1 L605.5,298.2 L606.0,298.2 L606.5,297.9 L607.0,297.7 L607.5,297.4 L608.0,297.2 L608.5,296.8 L609.0,296.3 L609.5,295.7 L610.0,295.1 L610.5,294.6 L611.0,294.0 L611.5,293.4 L612.0,292.9 L612.5,292.7 L613.0,293.1 L613.5,293.5 L614.0,293.9 L614.5,294.4 L615.0,294.8 L615.5,295.3 L616.0,295.9 L616.5,296.5 L617.0,297.0 L617.5,297.5 L618.0,297.8 L618.5,298.0 L619.0,298.1 L619.5,297.9 L620.0,297.7 L620.5,297.4 L621.0,297.2 L621.5,296.8 L622.0,296.3 L622.5,295.7 L623.0,295.1 L623.5,294.4 L624.0,293.8 L624.5,293.2 L625.0,292.6 L625.5,292.6 L626.0,293.0 L626.5,293.4 L627.0,293.8 L627.5,294.3 L628.0,294.8 L628.5,295.4 L629.0,295.9 L629.5,296.4 L630.0,296.8 L630.5,297.0 L631.0,297.0 L631.5,296.8 L632.0,296.6 L632.5,296.4 L633.0,296.3 L633.5,296.1 L634.0,295.7 L634.5,295.3 L635.0,294.9 L635.5,294.4 L636.0,294.0 L636.5,293.6 L637.0,293.1 L637.5,292.7 L638.0,292.2 L638.5,292.3 L639.0,292.6 L639.5,292.9 L640.0,293.3 L640.5,293.6 L641.0,294.1 L641.5,294.5 L642.0,295.0 L642.5,295.5 L643.0,295.9 L643.5,296.1 L644.0,296.3 L644.5,296.4 L645.0,296.2 L645.5,296.0 L646.0,295.8 L646.5,295.6 L647.0,295.4 L647.5,294.9 L648.0,294.5 L648.5,294.0 L649.0,293.6 L649.5,293.1 L650.0,292.7 L650.5,292.2 L651.0,292.4 L651.5,292.8 L652.0,293.2 L652.5,293.6 L653.0,294.0 L653.5,294.5 L654.0,295.0 L654.5,295.6 L655.0,296.1 L655.5,296.6 L656.0,297.0 L656.5,297.3 L657.0,297.4 L657.5,297.5 L658.0,297.2 L658.5,297.0 L659.0,296.8 L659.5,296.5 L660.0,296.1 L660.5,295.6 L661.0,295.1 L661.5,294.5 L662.0,294.0 L662.5,293.4 L663.0,292.9 L663.5,292.3 L664.0,292.8 L664.5,293.4 L665.0,293.9 L665.5,294.6 L666.0,295.3 L666.0,288.0 Z" fill="#5555cc"/>
<g shape-rendering="crispEdges"><rect x="80" y="22" width="1" height="300" fill="#909090" fill-opacity="0.22"/><rect x="93" y="22" width="1" height="300" fill="#909090" fill-opacity="0.22"/><rect x="105" y="22" width="1" height="300" fill="#909090" fill-opacity="0.22"/><rect x="118" y="22" width="1" height="300" fill="#909090" fill-opacity="0.22"/><rect x="143" y="22" width="1" height="300" fill="#909090" fill-opacity="0.22"/><rect x="155" y="22" width="1" height="300" fill="#909090" fill-opacity="0.22"/><rect x="168" y="22" width="1" height="300" fill="#909090" fill-opacity="0.22"/><rect x="181" y="22" width="1" height="300" fill="#909090" fill-opacity="0.22"/><rect x="193" y="22" width="1" height="300" fill="#909090" fill-opacity="0.22"/><rect x="206" y="22" width="1" height="300" fill="#909090" fill-opacity="0.22"/><rect x="231" y="22" width="1" height="300" fill="#909090" fill-opacity="0.22"/><rect x="243" y="22" width="1" height="300" fill="#909090" fill-opacity="0.22"/><rect x="256" y="22" width="1" height="300" fill="#909090" fill-opacity="0.22"/><rect x="269" y="22" width="1" height="300" fill="#909090" fill-opacity="0.22"/><rect x="281" y="22" width="1" height="300" fill="#909090" fill-opacity="0.22"/><rect x="294" y="22" width="1" height="300" fill="#909090" fill-opacity="0.22"/><rect x="319" y="22" width="1" height="300" fill="#909090" fill-opacity="0.22"/><rect x="332" y="22" width="1" height="300" fill="#909090" fill-opacity="0.22"/><rect x="344" y="22" width="1" height="300" fill="#909090" fill-opacity="0.22"/><rect x="357" y="22" width="1" height="300" fill="#909090" fill-opacity="0.22"/><rect x="369" y="22" width="1" height="300" fill="#909090" fill-opacity="0.22"/><rect x="382" y="22" width="1" height="300" fill="#909090" fill-opacity="0.22"/><rect x="407" y="22" width="1" height="300" fill="#909090" fill-opacity="0.22"/><rect x="420" y="22" width="1" height="300" fill="#909090" fill-opacity="0.22"/><rect x="432" y="22" width="1" height="300" fill="#909090" fill-opacity="0.22"/><rect x="445" y="22" width="1" height="300" fill="#909090" fill-opacity="0.22"/><rect x="457" y="22" width="1" height="300" fill="#909090" fill-opacity="0.22"/><rect x="470" y="22" width="1" height="300" fill="#909090" fill-opacity="0.22"/><rect x="495" y="22" width="1" height="300" fill="#909090" fill-opacity="0.22"/><rect x="508" y="22" width="1" height="300" fill="#909090" fill-opacity="0.22"/><rect x="520" y="22" width="1" height="300" fill="#909090" fill-opacity="0.22"/><rect x="533" y="22" width="1" height="300" fill="#909090" fill-opacity="0.22"/><rect x="545" y="22" width="1" height="300" fill="#909090" fill-opacity="0.22"/><rect x="558" y="22" width="1" height="300" fill="#909090" fill-opacity="0.22"/><rect x="583" y="22" width="1" height="300" fill="#909090" fill-opacity="0.22"/><rect x="596" y="22" width="1" height="300" fill="#909090" fill-opacity="0.22"/><rect x="608" y="22" width="1" height="300" fill="#909090" fill-opacity="0.22"/><rect x="621" y="22" width="1" height="300" fill="#909090" fill-opacity="0.22"/><rect x="633" y="22" width="1" height="300" fill="#909090" fill-opacity="0.22"/><rect x="646" y="22" width="1" height="300" fill="#909090" fill-opacity="0.22"/><rect x="65" y="50" width="604" height="1" fill="#909090" fill-opacity="0.22"/><rect x="65" y="67" width="604" height="1" fill="#909090" fill-opacity="0.22"/><rect x="65" y="84" width="604" height="1" fill="#909090" fill-opacity="0.22"/><rect x="65" y="101" width="604" height="1" fill="#909090" fill-opacity="0.22"/><rect x="65" y="135" width="604" height="1" fill="#909090" fill-opacity="0.22"/><rect x="65" y="152" width="604" height="1" fill="#909090" fill-opacity="0.22"/><rect x="65" y="169" width="604" height="1" fill="#909090" fill-opacity="0.22"/><rect x="65" y="186" width="604" height="1" fill="#909090" fill-opacity="0.22"/><rect x="65" y="220" width="604" height="1" fill="#909090" fill-opacity="0.22"/><rect x="65" y="237" width="604" height="1" fill="#909090" fill-opacity="0.22"/><rect x="65" y="254" width="604" height="1" fill="#909090" fill-opacity="0.22"/><rect x="65" y="271" width="604" height="1" fill="#909090" fill-opacity="0.22"/><rect x="65" y="305" width="604" height="1" fill="#909090" fill-opacity="0.22"/><rect x="130" y="20" width="1" height="306" fill="#e05050" fill-opacity="0.33"/><rect x="218" y="20" width="1" height="306" fill="#e05050" fill-opacity="0.33"/><rect x="306" y="20" width="1" height="306" fill="#e05050" fill-opacity="0.33"/><rect x="482" y="20" width="1" height="306" fill="#e05050" fill-opacity="0.33"/><rect x="570" y="20" width="1" height="306" fill="#e05050" fill-opacity="0.33"/><rect x="659" y="20" width="1" height="306" fill="#e05050" fill-opacity="0.33"/><rect x="65" y="33" width="605" height="1" fill="#e05050" fill-opacity="0.33"/><rect x="65" y="118" width="605" height="1" fill="#e05050" fill-opacity="0.33"/><rect x="65" y="203" width="605" height="1" fill="#e05050" fill-opacity="0.33"/></g>
<rect x="65" y="288" width="603" height="1" fill="#ee0000" shape-rendering="crispEdges"/>
<rect x="67" y="101" width="600" height="1" fill="#484848" shape-rendering="crispEdges"/>
<rect x="67" y="102" width="600" height="1" fill="#000" fill-opacity="0.28" shape-rendering="crispEdges"/>
<rect x="67" y="100" width="600" height="1" fill="#000" fill-opacity="0.08" shape-rendering="crispEdges"/>
<rect x="394" y="322" width="1" height="4" fill="#e05050" fill-opacity="0.33" shape-rendering="crispEdges"/>
<rect x="394" y="20" width="1" height="2" fill="#e05050" fill-opacity="0.33" shape-rendering="crispEdges"/>
<rect x="67" y="18" width="1" height="308" fill="#666666" shape-rendering="crispEdges"/>
<rect x="63" y="322" width="606" height="1" fill="#666666" shape-rendering="crispEdges"/>
<rect x="394" y="22" width="1" height="301" fill="#620808" shape-rendering="crispEdges"/>
<path d="M64.8,20 L67.5,15 L70.2,20 Z" fill="#802020"/>
<path d="M669,320 L674,322.5 L669,325 Z" fill="#802020"/>
<text x="60.10" y="35.50" style="font-family:'Liberation Mono',monospace;text-rendering:geometricPrecision;font-size:10.280px;fill:#000;letter-spacing:-0.319px;stroke:#000;stroke-width:0.10px" text-anchor="end">3 G</text>
<text x="60.10" y="120.50" style="font-family:'Liberation Mono',monospace;text-rendering:geometricPrecision;font-size:10.280px;fill:#000;letter-spacing:-0.319px;stroke:#000;stroke-width:0.10px" text-anchor="end">2 G</text>
<text x="60.10" y="205.50" style="font-family:'Liberation Mono',monospace;text-rendering:geometricPrecision;font-size:10.280px;fill:#000;letter-spacing:-0.319px;stroke:#000;stroke-width:0.10px" text-anchor="end">1 G</text>
<text x="60.10" y="290.50" style="font-family:'Liberation Mono',monospace;text-rendering:geometricPrecision;font-size:10.280px;fill:#000;letter-spacing:-0.319px;stroke:#000;stroke-width:0.10px" text-anchor="end">0</text>
<text x="86.50" y="337.00" style="font-family:'Liberation Mono',monospace;text-rendering:geometricPrecision;font-size:10.280px;fill:#000;stroke:#000;stroke-width:0.10px" text-anchor="middle">Week 49</text>
<text x="174.50" y="337.00" style="font-family:'Liberation Mono',monospace;text-rendering:geometricPrecision;font-size:10.280px;fill:#000;stroke:#000;stroke-width:0.10px" text-anchor="middle">Week 50</text>
<text x="262.50" y="337.00" style="font-family:'Liberation Mono',monospace;text-rendering:geometricPrecision;font-size:10.280px;fill:#000;stroke:#000;stroke-width:0.10px" text-anchor="middle">Week 51</text>
<text x="350.50" y="337.00" style="font-family:'Liberation Mono',monospace;text-rendering:geometricPrecision;font-size:10.280px;fill:#000;stroke:#000;stroke-width:0.10px" text-anchor="middle">Week 52</text>
<text x="438.50" y="337.00" style="font-family:'Liberation Mono',monospace;text-rendering:geometricPrecision;font-size:10.280px;fill:#000;stroke:#000;stroke-width:0.10px" text-anchor="middle">Week 01</text>
<text x="526.50" y="337.00" style="font-family:'Liberation Mono',monospace;text-rendering:geometricPrecision;font-size:10.280px;fill:#000;stroke:#000;stroke-width:0.10px" text-anchor="middle">Week 02</text>
<text x="614.50" y="337.00" style="font-family:'Liberation Mono',monospace;text-rendering:geometricPrecision;font-size:10.280px;fill:#000;stroke:#000;stroke-width:0.10px" text-anchor="middle">Week 03</text>
<text x="0" y="0" transform="translate(19,171) rotate(-90)" style="font-family:'Liberation Mono',monospace;text-rendering:geometricPrecision;font-size:11.73px;fill:#000;stroke:#000;stroke-width:0.12px" text-anchor="middle">bits/s</text>
<text x="0" y="0" transform="translate(684,7.2) rotate(90)" style="font-family:'Liberation Mono',monospace;text-rendering:geometricPrecision;font-size:8.4px;fill:#999999;stroke:#999999;stroke-width:0.15px">RRDTOOL / TOBI OETIKER</text>
<rect x="16.5" y="346.5" width="8" height="8" fill="#5555cc" stroke="#000" stroke-width="1" shape-rendering="crispEdges"/>
<rect x="81.5" y="346.5" width="8" height="8" fill="#33cc33" stroke="#000" stroke-width="1" shape-rendering="crispEdges"/>
<rect x="146.5" y="346.5" width="8" height="8" fill="#f8c53c" stroke="#000" stroke-width="1" shape-rendering="crispEdges"/>
<rect x="211.5" y="346.5" width="8" height="8" fill="#000000" stroke="#000" stroke-width="1" shape-rendering="crispEdges"/>
<text x="29.80" y="354.00" style="font-family:'Liberation Mono',monospace;text-rendering:geometricPrecision;font-size:11.900px;fill:#000;letter-spacing:-0.108px;stroke:#000;stroke-width:0.12px" >pmtpa</text>
<text x="94.80" y="354.00" style="font-family:'Liberation Mono',monospace;text-rendering:geometricPrecision;font-size:11.900px;fill:#000;letter-spacing:-0.108px;stroke:#000;stroke-width:0.12px" >knams</text>
<text x="159.80" y="354.00" style="font-family:'Liberation Mono',monospace;text-rendering:geometricPrecision;font-size:11.900px;fill:#000;letter-spacing:-0.108px;stroke:#000;stroke-width:0.12px" >yaseo</text>
<text x="224.80" y="354.00" style="font-family:'Liberation Mono',monospace;text-rendering:geometricPrecision;font-size:11.900px;fill:#000;letter-spacing:-0.108px;stroke:#000;stroke-width:0.12px" >95th percentile</text>
<text x="346.80" y="354.00" style="font-family:'Liberation Mono',monospace;text-rendering:geometricPrecision;font-size:11.900px;fill:#000;letter-spacing:-0.108px;stroke:#000;stroke-width:0.12px" >Pos: out - Neg: in</text>
<text x="488.80" y="354.00" style="font-family:'Liberation Mono',monospace;text-rendering:geometricPrecision;font-size:11.900px;fill:#000;letter-spacing:-0.108px;stroke:#000;stroke-width:0.12px" >Mon Jan 22 15:19:03 2007</text>
<text x="15.70" y="368.00" style="font-family:'Liberation Mono',monospace;text-rendering:geometricPrecision;font-size:11.900px;fill:#000;letter-spacing:-0.108px;stroke:#000;stroke-width:0.12px" >Last / avg / max pmtpa out:   0.0  / 905.0M / 1708.6Mbit/s  in:   0.0M /  74.3M / 140.6Mbit/s</text>
<text x="15.70" y="382.00" style="font-family:'Liberation Mono',monospace;text-rendering:geometricPrecision;font-size:11.900px;fill:#000;letter-spacing:-0.108px;stroke:#000;stroke-width:0.12px" >Last / avg / max knams out:   0.0M / 362.6M / 881.0Mbit/s  in:   0.0M /  91.9M / 194.6Mbit/s</text>
<text x="15.70" y="396.00" style="font-family:'Liberation Mono',monospace;text-rendering:geometricPrecision;font-size:11.900px;fill:#000;letter-spacing:-0.108px;stroke:#000;stroke-width:0.12px" >Last / avg / max yaseo out:   0.0M / 140.5M / 311.1Mbit/s  in:   0.0M /  44.1M / 114.7Mbit/s</text>
<text x="15.70" y="410.00" style="font-family:'Liberation Mono',monospace;text-rendering:geometricPrecision;font-size:11.900px;fill:#000;letter-spacing:-0.108px;stroke:#000;stroke-width:0.12px" >Last / avg / max Total out:   0.0  /   1.4G /   2.6Gbit/s  in:   0.0  / 210.3M / 388.8Mbit/s</text>
</svg></body></html>
